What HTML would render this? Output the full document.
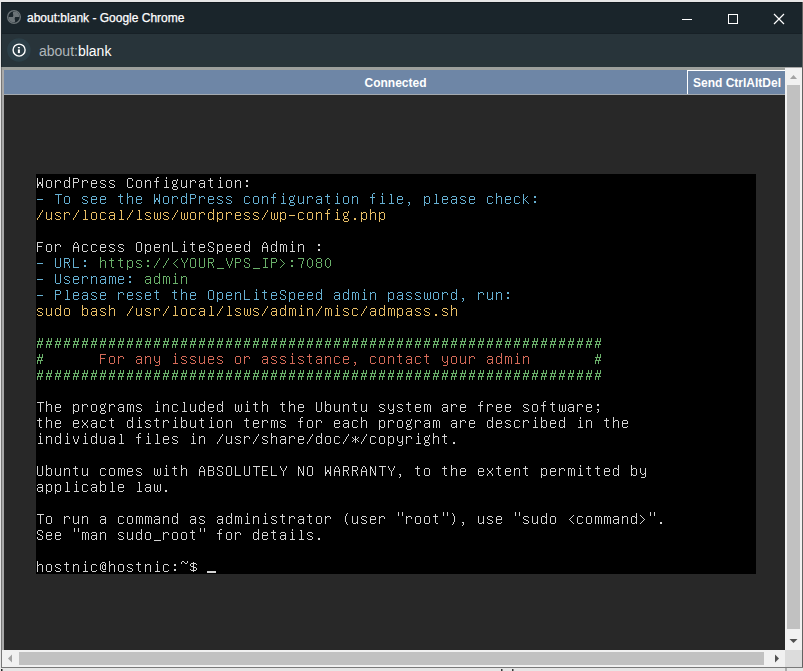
<!DOCTYPE html>
<html><head><meta charset="utf-8">
<style>
*{margin:0;padding:0;box-sizing:border-box}
html,body{width:803px;height:671px;overflow:hidden;background:#e6e6e6;font-family:"Liberation Sans",sans-serif;position:relative}
.abs{position:absolute}
#frame{position:absolute;left:1px;top:2px;width:802px;height:666px;background:#777}
#rb{position:absolute;left:802px;top:2px;width:1px;height:666px;background:#626262}
#title{position:absolute;left:2px;top:2px;width:800px;height:31px;background:#1a252b;border-top:1px solid #121a1f}
#addr{position:absolute;left:2px;top:33px;width:800px;height:34px;background:#28343a;border-top:1px solid #172026}
#page{position:absolute;left:2px;top:67px;width:800px;height:600px;background:#a8a8a8}
#status{position:absolute;left:4px;top:70px;width:781px;height:24px;background:#6e86a6;color:#fff;font:bold 12px "Liberation Sans",sans-serif}
#sline{position:absolute;left:4px;top:94px;width:781px;height:1px;background:#a4aab0}
#canvas{position:absolute;left:4px;top:95px;width:781px;height:555px;background:#282828}
#btn{position:absolute;left:687px;top:70px;width:98px;height:24px;border-left:1px solid #fff;border-top:1px solid #fff}
#vsb{position:absolute;left:785px;top:68px;width:17px;height:582px;background:#f1f1f1}
#vth{position:absolute;left:787px;top:85px;width:13px;height:544px;background:#c1c1c1}
#hsb{position:absolute;left:2px;top:650px;width:783px;height:17px;background:#f1f1f1}
#hth{position:absolute;left:19px;top:652px;width:745px;height:13px;background:#c1c1c1}
#corner{position:absolute;left:785px;top:650px;width:17px;height:17px;background:#dcdcdc}
#bline{position:absolute;left:1px;top:667px;width:802px;height:1px;background:#7a7a7a}
#term{position:absolute;left:36px;top:174px;width:720px;height:400px}
</style></head><body>
<div id="frame"></div><div id="rb"></div>
<div id="title">
  <svg class="abs" style="left:0;top:-1.1px" width="800" height="31">
   <circle cx="12" cy="15" r="6.35" fill="none" stroke="#6b7377" stroke-width="1.35"/>
   <path d="M10.8 15 L17.4 15 C17.4 11.6 15.2 9.6 12.2 9.6 C10.8 9.6 10.6 11.2 11.1 12.3 C11.5 13.2 11.3 14.2 10.8 15 Z" fill="#6b7377"/>
   <path d="M13.2 15 L6.6 15 C6.6 18.4 8.8 20.4 11.8 20.4 C13.2 20.4 13.4 18.8 12.9 17.7 C12.5 16.8 12.7 15.8 13.2 15 Z" fill="#6b7377"/>
  </svg>
  <div class="abs" style="left:25px;top:8px;font-size:12px;color:#fff;white-space:nowrap;-webkit-text-stroke:0.25px #fff">about:blank - Google Chrome</div>
  <svg class="abs" style="left:0;top:0" width="800" height="31">
   <rect x="680" y="16" width="10" height="1" fill="#fff"/>
   <rect x="726.5" y="11.5" width="9" height="9" fill="none" stroke="#fff" stroke-width="1"/>
   <path d="M772 11 L782 21 M782 11 L772 21" stroke="#fff" stroke-width="1.2"/>
  </svg>
</div>
<div id="addr">
  <svg class="abs" style="left:0;top:0" width="100" height="34">
   <circle cx="16.9" cy="16" r="11.8" fill="#2c3f48"/>
   <circle cx="17.1" cy="16.1" r="6" fill="none" stroke="#fff" stroke-width="1.4"/>
   <rect x="15.9" y="15.4" width="2" height="3.7" fill="#fff"/>
   <rect x="15.9" y="13" width="2" height="1.3" fill="#fff"/>
  </svg>
  <div class="abs" style="left:37px;top:9px;font-size:14px;color:#b0b7ba;white-space:nowrap">about:<span style="color:#fff">blank</span></div>
</div>
<div id="page"></div><div class="abs" style="left:2px;top:67px;width:783px;height:3px;background:#9da09d"></div><div class="abs" style="left:1px;top:2px;width:1px;height:65px;background:#1e272c"></div>
<div id="status"><div class="abs" style="left:1px;width:781px;top:6px;text-align:center">Connected</div></div>
<div id="btn"><div class="abs" style="left:5px;top:5px;font:bold 12px 'Liberation Sans',sans-serif;color:#fff;white-space:nowrap">Send CtrlAltDel</div></div>
<div id="sline"></div>
<div id="canvas"></div>
<div id="vsb"></div><div id="vth"></div>
<div id="hsb"></div><div id="hth"></div>
<div id="corner"></div>
<div id="bline"></div>
<svg class="abs" style="left:0;top:0" width="803" height="671">
 <path d="M790 79 L797 79 L793.5 75 Z" fill="#a3a3a3"/>
 <path d="M789.5 639 L797.5 639 L793.5 643 Z" fill="#505050"/>
 <path d="M12 654.5 L12 662.5 L8 658.5 Z" fill="#a3a3a3"/>
 <path d="M775 654.5 L775 662.5 L779 658.5 Z" fill="#505050"/>
 <rect x="501" y="669" width="1.5" height="2" fill="#333"/>
 <rect x="512" y="669" width="1.5" height="2" fill="#333"/>
 <rect x="785.5" y="668" width="1" height="3" fill="#777"/>
 <rect x="1" y="669" width="1.5" height="2" fill="#222"/>
</svg>
<svg id="term" width="720" height="400" viewBox="0 0 720 400" shape-rendering="crispEdges"><rect width="720" height="400" fill="#000"/><path fill="#d4d4d4" d="M1 4h1v6h-1zM6 4h1v6h-1zM3 8h2v2h-2zM1 10h2v2h-2zM5 10h2v2h-2zM1 12h1v2h-1zM6 12h1v2h-1zM11 6h4v1h-4zM10 7h1v6h-1zM15 7h1v6h-1zM11 13h4v1h-4zM19 6h1v1h-1zM21 6h3v1h-3zM19 7h2v1h-2zM24 7h1v2h-1zM19 8h1v6h-1zM33 3h1v4h-1zM29 6h3v1h-3zM28 7h1v6h-1zM32 7h2v1h-2zM33 8h1v4h-1zM32 12h2v1h-2zM29 13h3v1h-3zM33 13h1v1h-1zM37 4h5v1h-5zM37 5h1v3h-1zM42 5h1v3h-1zM37 8h5v1h-5zM37 9h1v5h-1zM46 6h1v1h-1zM48 6h3v1h-3zM46 7h2v1h-2zM51 7h1v2h-1zM46 8h1v6h-1zM56 6h4v1h-4zM55 7h1v2h-1zM60 7h1v2h-1zM55 9h6v1h-6zM55 10h1v3h-1zM60 12h1v1h-1zM56 13h4v1h-4zM65 6h4v1h-4zM64 7h1v2h-1zM69 7h1v1h-1zM65 9h2v1h-2zM67 10h2v1h-2zM69 11h1v2h-1zM64 12h1v1h-1zM65 13h4v1h-4zM74 6h4v1h-4zM73 7h1v2h-1zM78 7h1v1h-1zM74 9h2v1h-2zM76 10h2v1h-2zM78 11h1v2h-1zM73 12h1v1h-1zM74 13h4v1h-4zM92 4h4v1h-4zM91 5h1v8h-1zM96 5h1v2h-1zM96 11h1v2h-1zM92 13h4v1h-4zM101 6h4v1h-4zM100 7h1v6h-1zM105 7h1v6h-1zM101 13h4v1h-4zM109 6h1v1h-1zM111 6h3v1h-3zM109 7h2v1h-2zM114 7h1v7h-1zM109 8h1v6h-1zM121 3h2v1h-2zM120 4h1v3h-1zM118 7h5v1h-5zM120 8h1v6h-1zM130 3h1v2h-1zM129 6h2v1h-2zM130 7h1v6h-1zM128 13h5v1h-5zM141 5h1v2h-1zM137 6h3v1h-3zM136 7h1v3h-1zM140 7h1v3h-1zM137 10h3v1h-3zM137 11h1v1h-1zM137 12h4v1h-4zM136 13h1v2h-1zM141 13h1v2h-1zM137 15h4v1h-4zM145 6h1v7h-1zM150 6h1v6h-1zM149 12h2v1h-2zM146 13h3v1h-3zM150 13h1v1h-1zM154 6h1v1h-1zM156 6h3v1h-3zM154 7h2v1h-2zM159 7h1v2h-1zM154 8h1v6h-1zM164 6h4v1h-4zM163 7h1v1h-1zM168 7h1v2h-1zM164 9h5v1h-5zM163 10h1v3h-1zM168 10h1v2h-1zM167 12h2v1h-2zM164 13h3v1h-3zM168 13h1v1h-1zM174 4h1v2h-1zM172 6h5v1h-5zM174 7h1v6h-1zM175 13h2v1h-2zM184 3h1v2h-1zM183 6h2v1h-2zM184 7h1v6h-1zM182 13h5v1h-5zM191 6h4v1h-4zM190 7h1v6h-1zM195 7h1v6h-1zM191 13h4v1h-4zM199 6h1v1h-1zM201 6h3v1h-3zM199 7h2v1h-2zM204 7h1v7h-1zM199 8h1v6h-1zM210 6h2v2h-2zM210 11h2v2h-2zM1 68h6v1h-6zM1 69h1v3h-1zM1 72h5v1h-5zM1 73h1v5h-1zM11 70h4v1h-4zM10 71h1v6h-1zM15 71h1v6h-1zM11 77h4v1h-4zM19 70h1v1h-1zM21 70h3v1h-3zM19 71h2v1h-2zM24 71h1v2h-1zM19 72h1v6h-1zM39 68h2v1h-2zM38 69h1v2h-1zM41 69h1v2h-1zM37 71h1v2h-1zM42 71h1v2h-1zM37 73h6v1h-6zM37 74h1v4h-1zM42 74h1v4h-1zM47 70h4v1h-4zM46 71h1v6h-1zM51 71h1v1h-1zM51 76h1v1h-1zM47 77h4v1h-4zM56 70h4v1h-4zM55 71h1v6h-1zM60 71h1v1h-1zM60 76h1v1h-1zM56 77h4v1h-4zM65 70h4v1h-4zM64 71h1v2h-1zM69 71h1v2h-1zM64 73h6v1h-6zM64 74h1v3h-1zM69 76h1v1h-1zM65 77h4v1h-4zM74 70h4v1h-4zM73 71h1v2h-1zM78 71h1v1h-1zM74 73h2v1h-2zM76 74h2v1h-2zM78 75h1v2h-1zM73 76h1v1h-1zM74 77h4v1h-4zM83 70h4v1h-4zM82 71h1v2h-1zM87 71h1v1h-1zM83 73h2v1h-2zM85 74h2v1h-2zM87 75h1v2h-1zM82 76h1v1h-1zM83 77h4v1h-4zM101 68h4v1h-4zM100 69h1v8h-1zM105 69h1v8h-1zM101 77h4v1h-4zM109 70h1v1h-1zM111 70h3v1h-3zM109 71h2v1h-2zM114 71h1v6h-1zM109 72h1v4h-1zM109 76h2v1h-2zM109 77h1v3h-1zM111 77h3v1h-3zM119 70h4v1h-4zM118 71h1v2h-1zM123 71h1v2h-1zM118 73h6v1h-6zM118 74h1v3h-1zM123 76h1v1h-1zM119 77h4v1h-4zM127 70h1v1h-1zM129 70h3v1h-3zM127 71h2v1h-2zM132 71h1v7h-1zM127 72h1v6h-1zM136 68h1v9h-1zM136 77h6v1h-6zM148 67h1v2h-1zM147 70h2v1h-2zM148 71h1v6h-1zM146 77h5v1h-5zM156 68h1v2h-1zM154 70h5v1h-5zM156 71h1v6h-1zM157 77h2v1h-2zM164 70h4v1h-4zM163 71h1v2h-1zM168 71h1v2h-1zM163 73h6v1h-6zM163 74h1v3h-1zM168 76h1v1h-1zM164 77h4v1h-4zM173 68h4v1h-4zM172 69h1v3h-1zM177 69h1v2h-1zM173 72h2v1h-2zM175 73h2v1h-2zM177 74h1v3h-1zM172 75h1v2h-1zM173 77h4v1h-4zM181 70h1v1h-1zM183 70h3v1h-3zM181 71h2v1h-2zM186 71h1v6h-1zM181 72h1v4h-1zM181 76h2v1h-2zM181 77h1v3h-1zM183 77h3v1h-3zM191 70h4v1h-4zM190 71h1v2h-1zM195 71h1v2h-1zM190 73h6v1h-6zM190 74h1v3h-1zM195 76h1v1h-1zM191 77h4v1h-4zM200 70h4v1h-4zM199 71h1v2h-1zM204 71h1v2h-1zM199 73h6v1h-6zM199 74h1v3h-1zM204 76h1v1h-1zM200 77h4v1h-4zM213 67h1v4h-1zM209 70h3v1h-3zM208 71h1v6h-1zM212 71h2v1h-2zM213 72h1v4h-1zM212 76h2v1h-2zM209 77h3v1h-3zM213 77h1v1h-1zM228 68h2v1h-2zM227 69h1v2h-1zM230 69h1v2h-1zM226 71h1v2h-1zM231 71h1v2h-1zM226 73h6v1h-6zM226 74h1v4h-1zM231 74h1v4h-1zM240 67h1v4h-1zM236 70h3v1h-3zM235 71h1v6h-1zM239 71h2v1h-2zM240 72h1v4h-1zM239 76h2v1h-2zM236 77h3v1h-3zM240 77h1v1h-1zM244 70h3v1h-3zM248 70h2v1h-2zM244 71h1v7h-1zM247 71h1v7h-1zM250 71h1v7h-1zM256 67h1v2h-1zM255 70h2v1h-2zM256 71h1v6h-1zM254 77h5v1h-5zM262 70h1v1h-1zM264 70h3v1h-3zM262 71h2v1h-2zM267 71h1v7h-1zM262 72h1v6h-1zM282 70h2v2h-2zM282 75h2v2h-2zM1 228h7v1h-7zM4 229h1v9h-1zM10 227h1v4h-1zM12 230h3v1h-3zM10 231h2v1h-2zM15 231h1v7h-1zM10 232h1v6h-1zM20 230h4v1h-4zM19 231h1v2h-1zM24 231h1v2h-1zM19 233h6v1h-6zM19 234h1v3h-1zM24 236h1v1h-1zM20 237h4v1h-4zM37 230h1v1h-1zM39 230h3v1h-3zM37 231h2v1h-2zM42 231h1v6h-1zM37 232h1v4h-1zM37 236h2v1h-2zM37 237h1v3h-1zM39 237h3v1h-3zM46 230h1v1h-1zM48 230h3v1h-3zM46 231h2v1h-2zM51 231h1v2h-1zM46 232h1v6h-1zM56 230h4v1h-4zM55 231h1v6h-1zM60 231h1v6h-1zM56 237h4v1h-4zM69 229h1v2h-1zM65 230h3v1h-3zM64 231h1v3h-1zM68 231h1v3h-1zM65 234h3v1h-3zM65 235h1v1h-1zM65 236h4v1h-4zM64 237h1v2h-1zM69 237h1v2h-1zM65 239h4v1h-4zM73 230h1v1h-1zM75 230h3v1h-3zM73 231h2v1h-2zM78 231h1v2h-1zM73 232h1v6h-1zM83 230h4v1h-4zM82 231h1v1h-1zM87 231h1v2h-1zM83 233h5v1h-5zM82 234h1v3h-1zM87 234h1v2h-1zM86 236h2v1h-2zM83 237h3v1h-3zM87 237h1v1h-1zM91 230h3v1h-3zM95 230h2v1h-2zM91 231h1v7h-1zM94 231h1v7h-1zM97 231h1v7h-1zM101 230h4v1h-4zM100 231h1v2h-1zM105 231h1v1h-1zM101 233h2v1h-2zM103 234h2v1h-2zM105 235h1v2h-1zM100 236h1v1h-1zM101 237h4v1h-4zM121 227h1v2h-1zM120 230h2v1h-2zM121 231h1v6h-1zM119 237h5v1h-5zM127 230h1v1h-1zM129 230h3v1h-3zM127 231h2v1h-2zM132 231h1v7h-1zM127 232h1v6h-1zM137 230h4v1h-4zM136 231h1v6h-1zM141 231h1v1h-1zM141 236h1v1h-1zM137 237h4v1h-4zM147 228h2v1h-2zM148 229h1v8h-1zM146 237h5v1h-5zM154 230h1v7h-1zM159 230h1v6h-1zM158 236h2v1h-2zM155 237h3v1h-3zM159 237h1v1h-1zM168 227h1v4h-1zM164 230h3v1h-3zM163 231h1v6h-1zM167 231h2v1h-2zM168 232h1v4h-1zM167 236h2v1h-2zM164 237h3v1h-3zM168 237h1v1h-1zM173 230h4v1h-4zM172 231h1v2h-1zM177 231h1v2h-1zM172 233h6v1h-6zM172 234h1v3h-1zM177 236h1v1h-1zM173 237h4v1h-4zM186 227h1v4h-1zM182 230h3v1h-3zM181 231h1v6h-1zM185 231h2v1h-2zM186 232h1v4h-1zM185 236h2v1h-2zM182 237h3v1h-3zM186 237h1v1h-1zM199 230h1v7h-1zM205 230h1v7h-1zM202 231h1v6h-1zM200 237h2v1h-2zM203 237h2v1h-2zM211 227h1v2h-1zM210 230h2v1h-2zM211 231h1v6h-1zM209 237h5v1h-5zM219 228h1v2h-1zM217 230h5v1h-5zM219 231h1v6h-1zM220 237h2v1h-2zM226 227h1v4h-1zM228 230h3v1h-3zM226 231h2v1h-2zM231 231h1v7h-1zM226 232h1v6h-1zM246 228h1v2h-1zM244 230h5v1h-5zM246 231h1v6h-1zM247 237h2v1h-2zM253 227h1v4h-1zM255 230h3v1h-3zM253 231h2v1h-2zM258 231h1v7h-1zM253 232h1v6h-1zM263 230h4v1h-4zM262 231h1v2h-1zM267 231h1v2h-1zM262 233h6v1h-6zM262 234h1v3h-1zM267 236h1v1h-1zM263 237h4v1h-4zM280 228h1v9h-1zM285 228h1v9h-1zM281 237h4v1h-4zM289 227h1v4h-1zM291 230h3v1h-3zM289 231h2v1h-2zM294 231h1v6h-1zM289 232h1v4h-1zM289 236h2v1h-2zM289 237h1v1h-1zM291 237h3v1h-3zM298 230h1v7h-1zM303 230h1v6h-1zM302 236h2v1h-2zM299 237h3v1h-3zM303 237h1v1h-1zM307 230h1v1h-1zM309 230h3v1h-3zM307 231h2v1h-2zM312 231h1v7h-1zM307 232h1v6h-1zM318 228h1v2h-1zM316 230h5v1h-5zM318 231h1v6h-1zM319 237h2v1h-2zM325 230h1v7h-1zM330 230h1v6h-1zM329 236h2v1h-2zM326 237h3v1h-3zM330 237h1v1h-1zM344 230h4v1h-4zM343 231h1v2h-1zM348 231h1v1h-1zM344 233h2v1h-2zM346 234h2v1h-2zM348 235h1v2h-1zM343 236h1v1h-1zM344 237h4v1h-4zM352 230h1v5h-1zM357 230h1v5h-1zM353 235h1v1h-1zM356 235h2v1h-2zM354 236h2v1h-2zM357 236h1v3h-1zM353 239h4v1h-4zM362 230h4v1h-4zM361 231h1v2h-1zM366 231h1v1h-1zM362 233h2v1h-2zM364 234h2v1h-2zM366 235h1v2h-1zM361 236h1v1h-1zM362 237h4v1h-4zM372 228h1v2h-1zM370 230h5v1h-5zM372 231h1v6h-1zM373 237h2v1h-2zM380 230h4v1h-4zM379 231h1v2h-1zM384 231h1v2h-1zM379 233h6v1h-6zM379 234h1v3h-1zM384 236h1v1h-1zM380 237h4v1h-4zM388 230h3v1h-3zM392 230h2v1h-2zM388 231h1v7h-1zM391 231h1v7h-1zM394 231h1v7h-1zM407 230h4v1h-4zM406 231h1v1h-1zM411 231h1v2h-1zM407 233h5v1h-5zM406 234h1v3h-1zM411 234h1v2h-1zM410 236h2v1h-2zM407 237h3v1h-3zM411 237h1v1h-1zM415 230h1v1h-1zM417 230h3v1h-3zM415 231h2v1h-2zM420 231h1v2h-1zM415 232h1v6h-1zM425 230h4v1h-4zM424 231h1v2h-1zM429 231h1v2h-1zM424 233h6v1h-6zM424 234h1v3h-1zM429 236h1v1h-1zM425 237h4v1h-4zM445 227h2v1h-2zM444 228h1v3h-1zM442 231h5v1h-5zM444 232h1v6h-1zM451 230h1v1h-1zM453 230h3v1h-3zM451 231h2v1h-2zM456 231h1v2h-1zM451 232h1v6h-1zM461 230h4v1h-4zM460 231h1v2h-1zM465 231h1v2h-1zM460 233h6v1h-6zM460 234h1v3h-1zM465 236h1v1h-1zM461 237h4v1h-4zM470 230h4v1h-4zM469 231h1v2h-1zM474 231h1v2h-1zM469 233h6v1h-6zM469 234h1v3h-1zM474 236h1v1h-1zM470 237h4v1h-4zM488 230h4v1h-4zM487 231h1v2h-1zM492 231h1v1h-1zM488 233h2v1h-2zM490 234h2v1h-2zM492 235h1v2h-1zM487 236h1v1h-1zM488 237h4v1h-4zM497 230h4v1h-4zM496 231h1v6h-1zM501 231h1v6h-1zM497 237h4v1h-4zM508 227h2v1h-2zM507 228h1v3h-1zM505 231h5v1h-5zM507 232h1v6h-1zM516 228h1v2h-1zM514 230h5v1h-5zM516 231h1v6h-1zM517 237h2v1h-2zM523 230h1v7h-1zM529 230h1v7h-1zM526 231h1v6h-1zM524 237h2v1h-2zM527 237h2v1h-2zM533 230h4v1h-4zM532 231h1v1h-1zM537 231h1v2h-1zM533 233h5v1h-5zM532 234h1v3h-1zM537 234h1v2h-1zM536 236h2v1h-2zM533 237h3v1h-3zM537 237h1v1h-1zM541 230h1v1h-1zM543 230h3v1h-3zM541 231h2v1h-2zM546 231h1v2h-1zM541 232h1v6h-1zM551 230h4v1h-4zM550 231h1v2h-1zM555 231h1v2h-1zM550 233h6v1h-6zM550 234h1v3h-1zM555 236h1v1h-1zM551 237h4v1h-4zM561 230h2v2h-2zM561 235h2v1h-2zM562 236h1v2h-1zM561 238h1v1h-1zM3 244h1v2h-1zM1 246h5v1h-5zM3 247h1v6h-1zM4 253h2v1h-2zM10 243h1v4h-1zM12 246h3v1h-3zM10 247h2v1h-2zM15 247h1v7h-1zM10 248h1v6h-1zM20 246h4v1h-4zM19 247h1v2h-1zM24 247h1v2h-1zM19 249h6v1h-6zM19 250h1v3h-1zM24 252h1v1h-1zM20 253h4v1h-4zM38 246h4v1h-4zM37 247h1v2h-1zM42 247h1v2h-1zM37 249h6v1h-6zM37 250h1v3h-1zM42 252h1v1h-1zM38 253h4v1h-4zM46 246h1v2h-1zM51 246h1v2h-1zM47 248h1v1h-1zM50 248h1v1h-1zM48 249h2v2h-2zM47 251h1v1h-1zM50 251h1v1h-1zM46 252h1v2h-1zM51 252h1v2h-1zM56 246h4v1h-4zM55 247h1v1h-1zM60 247h1v2h-1zM56 249h5v1h-5zM55 250h1v3h-1zM60 250h1v2h-1zM59 252h2v1h-2zM56 253h3v1h-3zM60 253h1v1h-1zM65 246h4v1h-4zM64 247h1v6h-1zM69 247h1v1h-1zM69 252h1v1h-1zM65 253h4v1h-4zM75 244h1v2h-1zM73 246h5v1h-5zM75 247h1v6h-1zM76 253h2v1h-2zM96 243h1v4h-1zM92 246h3v1h-3zM91 247h1v6h-1zM95 247h2v1h-2zM96 248h1v4h-1zM95 252h2v1h-2zM92 253h3v1h-3zM96 253h1v1h-1zM103 243h1v2h-1zM102 246h2v1h-2zM103 247h1v6h-1zM101 253h5v1h-5zM110 246h4v1h-4zM109 247h1v2h-1zM114 247h1v1h-1zM110 249h2v1h-2zM112 250h2v1h-2zM114 251h1v2h-1zM109 252h1v1h-1zM110 253h4v1h-4zM120 244h1v2h-1zM118 246h5v1h-5zM120 247h1v6h-1zM121 253h2v1h-2zM127 246h1v1h-1zM129 246h3v1h-3zM127 247h2v1h-2zM132 247h1v2h-1zM127 248h1v6h-1zM139 243h1v2h-1zM138 246h2v1h-2zM139 247h1v6h-1zM137 253h5v1h-5zM145 243h1v4h-1zM147 246h3v1h-3zM145 247h2v1h-2zM150 247h1v6h-1zM145 248h1v4h-1zM145 252h2v1h-2zM145 253h1v1h-1zM147 253h3v1h-3zM154 246h1v7h-1zM159 246h1v6h-1zM158 252h2v1h-2zM155 253h3v1h-3zM159 253h1v1h-1zM165 244h1v2h-1zM163 246h5v1h-5zM165 247h1v6h-1zM166 253h2v1h-2zM175 243h1v2h-1zM174 246h2v1h-2zM175 247h1v6h-1zM173 253h5v1h-5zM182 246h4v1h-4zM181 247h1v6h-1zM186 247h1v6h-1zM182 253h4v1h-4zM190 246h1v1h-1zM192 246h3v1h-3zM190 247h2v1h-2zM195 247h1v7h-1zM190 248h1v6h-1zM210 244h1v2h-1zM208 246h5v1h-5zM210 247h1v6h-1zM211 253h2v1h-2zM218 246h4v1h-4zM217 247h1v2h-1zM222 247h1v2h-1zM217 249h6v1h-6zM217 250h1v3h-1zM222 252h1v1h-1zM218 253h4v1h-4zM226 246h1v1h-1zM228 246h3v1h-3zM226 247h2v1h-2zM231 247h1v2h-1zM226 248h1v6h-1zM235 246h3v1h-3zM239 246h2v1h-2zM235 247h1v7h-1zM238 247h1v7h-1zM241 247h1v7h-1zM245 246h4v1h-4zM244 247h1v2h-1zM249 247h1v1h-1zM245 249h2v1h-2zM247 250h2v1h-2zM249 251h1v2h-1zM244 252h1v1h-1zM245 253h4v1h-4zM265 243h2v1h-2zM264 244h1v3h-1zM262 247h5v1h-5zM264 248h1v6h-1zM272 246h4v1h-4zM271 247h1v6h-1zM276 247h1v6h-1zM272 253h4v1h-4zM280 246h1v1h-1zM282 246h3v1h-3zM280 247h2v1h-2zM285 247h1v2h-1zM280 248h1v6h-1zM299 246h4v1h-4zM298 247h1v2h-1zM303 247h1v2h-1zM298 249h6v1h-6zM298 250h1v3h-1zM303 252h1v1h-1zM299 253h4v1h-4zM308 246h4v1h-4zM307 247h1v1h-1zM312 247h1v2h-1zM308 249h5v1h-5zM307 250h1v3h-1zM312 250h1v2h-1zM311 252h2v1h-2zM308 253h3v1h-3zM312 253h1v1h-1zM317 246h4v1h-4zM316 247h1v6h-1zM321 247h1v1h-1zM321 252h1v1h-1zM317 253h4v1h-4zM325 243h1v4h-1zM327 246h3v1h-3zM325 247h2v1h-2zM330 247h1v7h-1zM325 248h1v6h-1zM343 246h1v1h-1zM345 246h3v1h-3zM343 247h2v1h-2zM348 247h1v6h-1zM343 248h1v4h-1zM343 252h2v1h-2zM343 253h1v3h-1zM345 253h3v1h-3zM352 246h1v1h-1zM354 246h3v1h-3zM352 247h2v1h-2zM357 247h1v2h-1zM352 248h1v6h-1zM362 246h4v1h-4zM361 247h1v6h-1zM366 247h1v6h-1zM362 253h4v1h-4zM375 245h1v2h-1zM371 246h3v1h-3zM370 247h1v3h-1zM374 247h1v3h-1zM371 250h3v1h-3zM371 251h1v1h-1zM371 252h4v1h-4zM370 253h1v2h-1zM375 253h1v2h-1zM371 255h4v1h-4zM379 246h1v1h-1zM381 246h3v1h-3zM379 247h2v1h-2zM384 247h1v2h-1zM379 248h1v6h-1zM389 246h4v1h-4zM388 247h1v1h-1zM393 247h1v2h-1zM389 249h5v1h-5zM388 250h1v3h-1zM393 250h1v2h-1zM392 252h2v1h-2zM389 253h3v1h-3zM393 253h1v1h-1zM397 246h3v1h-3zM401 246h2v1h-2zM397 247h1v7h-1zM400 247h1v7h-1zM403 247h1v7h-1zM416 246h4v1h-4zM415 247h1v1h-1zM420 247h1v2h-1zM416 249h5v1h-5zM415 250h1v3h-1zM420 250h1v2h-1zM419 252h2v1h-2zM416 253h3v1h-3zM420 253h1v1h-1zM424 246h1v1h-1zM426 246h3v1h-3zM424 247h2v1h-2zM429 247h1v2h-1zM424 248h1v6h-1zM434 246h4v1h-4zM433 247h1v2h-1zM438 247h1v2h-1zM433 249h6v1h-6zM433 250h1v3h-1zM438 252h1v1h-1zM434 253h4v1h-4zM456 243h1v4h-1zM452 246h3v1h-3zM451 247h1v6h-1zM455 247h2v1h-2zM456 248h1v4h-1zM455 252h2v1h-2zM452 253h3v1h-3zM456 253h1v1h-1zM461 246h4v1h-4zM460 247h1v2h-1zM465 247h1v2h-1zM460 249h6v1h-6zM460 250h1v3h-1zM465 252h1v1h-1zM461 253h4v1h-4zM470 246h4v1h-4zM469 247h1v2h-1zM474 247h1v1h-1zM470 249h2v1h-2zM472 250h2v1h-2zM474 251h1v2h-1zM469 252h1v1h-1zM470 253h4v1h-4zM479 246h4v1h-4zM478 247h1v6h-1zM483 247h1v1h-1zM483 252h1v1h-1zM479 253h4v1h-4zM487 246h1v1h-1zM489 246h3v1h-3zM487 247h2v1h-2zM492 247h1v2h-1zM487 248h1v6h-1zM499 243h1v2h-1zM498 246h2v1h-2zM499 247h1v6h-1zM497 253h5v1h-5zM505 243h1v4h-1zM507 246h3v1h-3zM505 247h2v1h-2zM510 247h1v6h-1zM505 248h1v4h-1zM505 252h2v1h-2zM505 253h1v1h-1zM507 253h3v1h-3zM515 246h4v1h-4zM514 247h1v2h-1zM519 247h1v2h-1zM514 249h6v1h-6zM514 250h1v3h-1zM519 252h1v1h-1zM515 253h4v1h-4zM528 243h1v4h-1zM524 246h3v1h-3zM523 247h1v6h-1zM527 247h2v1h-2zM528 248h1v4h-1zM527 252h2v1h-2zM524 253h3v1h-3zM528 253h1v1h-1zM544 243h1v2h-1zM543 246h2v1h-2zM544 247h1v6h-1zM542 253h5v1h-5zM550 246h1v1h-1zM552 246h3v1h-3zM550 247h2v1h-2zM555 247h1v7h-1zM550 248h1v6h-1zM570 244h1v2h-1zM568 246h5v1h-5zM570 247h1v6h-1zM571 253h2v1h-2zM577 243h1v4h-1zM579 246h3v1h-3zM577 247h2v1h-2zM582 247h1v7h-1zM577 248h1v6h-1zM587 246h4v1h-4zM586 247h1v2h-1zM591 247h1v2h-1zM586 249h6v1h-6zM586 250h1v3h-1zM591 252h1v1h-1zM587 253h4v1h-4zM4 259h1v2h-1zM3 262h2v1h-2zM4 263h1v6h-1zM2 269h5v1h-5zM10 262h1v1h-1zM12 262h3v1h-3zM10 263h2v1h-2zM15 263h1v7h-1zM10 264h1v6h-1zM24 259h1v4h-1zM20 262h3v1h-3zM19 263h1v6h-1zM23 263h2v1h-2zM24 264h1v4h-1zM23 268h2v1h-2zM20 269h3v1h-3zM24 269h1v1h-1zM31 259h1v2h-1zM30 262h2v1h-2zM31 263h1v6h-1zM29 269h5v1h-5zM37 262h1v3h-1zM42 262h1v3h-1zM38 265h1v3h-1zM41 265h1v3h-1zM39 268h2v2h-2zM49 259h1v2h-1zM48 262h2v1h-2zM49 263h1v6h-1zM47 269h5v1h-5zM60 259h1v4h-1zM56 262h3v1h-3zM55 263h1v6h-1zM59 263h2v1h-2zM60 264h1v4h-1zM59 268h2v1h-2zM56 269h3v1h-3zM60 269h1v1h-1zM64 262h1v7h-1zM69 262h1v6h-1zM68 268h2v1h-2zM65 269h3v1h-3zM69 269h1v1h-1zM74 262h4v1h-4zM73 263h1v1h-1zM78 263h1v2h-1zM74 265h5v1h-5zM73 266h1v3h-1zM78 266h1v2h-1zM77 268h2v1h-2zM74 269h3v1h-3zM78 269h1v1h-1zM84 260h2v1h-2zM85 261h1v8h-1zM83 269h5v1h-5zM103 259h2v1h-2zM102 260h1v3h-1zM100 263h5v1h-5zM102 264h1v6h-1zM112 259h1v2h-1zM111 262h2v1h-2zM112 263h1v6h-1zM110 269h5v1h-5zM120 260h2v1h-2zM121 261h1v8h-1zM119 269h5v1h-5zM128 262h4v1h-4zM127 263h1v2h-1zM132 263h1v2h-1zM127 265h6v1h-6zM127 266h1v3h-1zM132 268h1v1h-1zM128 269h4v1h-4zM137 262h4v1h-4zM136 263h1v2h-1zM141 263h1v1h-1zM137 265h2v1h-2zM139 266h2v1h-2zM141 267h1v2h-1zM136 268h1v1h-1zM137 269h4v1h-4zM157 259h1v2h-1zM156 262h2v1h-2zM157 263h1v6h-1zM155 269h5v1h-5zM163 262h1v1h-1zM165 262h3v1h-3zM163 263h2v1h-2zM168 263h1v7h-1zM163 264h1v6h-1zM186 260h1v2h-1zM185 262h1v1h-1zM184 263h1v2h-1zM183 265h1v2h-1zM182 267h1v1h-1zM181 268h1v2h-1zM190 262h1v7h-1zM195 262h1v6h-1zM194 268h2v1h-2zM191 269h3v1h-3zM195 269h1v1h-1zM200 262h4v1h-4zM199 263h1v2h-1zM204 263h1v1h-1zM200 265h2v1h-2zM202 266h2v1h-2zM204 267h1v2h-1zM199 268h1v1h-1zM200 269h4v1h-4zM208 262h1v1h-1zM210 262h3v1h-3zM208 263h2v1h-2zM213 263h1v2h-1zM208 264h1v6h-1zM222 260h1v2h-1zM221 262h1v1h-1zM220 263h1v2h-1zM219 265h1v2h-1zM218 267h1v1h-1zM217 268h1v2h-1zM227 262h4v1h-4zM226 263h1v2h-1zM231 263h1v1h-1zM227 265h2v1h-2zM229 266h2v1h-2zM231 267h1v2h-1zM226 268h1v1h-1zM227 269h4v1h-4zM235 259h1v4h-1zM237 262h3v1h-3zM235 263h2v1h-2zM240 263h1v7h-1zM235 264h1v6h-1zM245 262h4v1h-4zM244 263h1v1h-1zM249 263h1v2h-1zM245 265h5v1h-5zM244 266h1v3h-1zM249 266h1v2h-1zM248 268h2v1h-2zM245 269h3v1h-3zM249 269h1v1h-1zM253 262h1v1h-1zM255 262h3v1h-3zM253 263h2v1h-2zM258 263h1v2h-1zM253 264h1v6h-1zM263 262h4v1h-4zM262 263h1v2h-1zM267 263h1v2h-1zM262 265h6v1h-6zM262 266h1v3h-1zM267 268h1v1h-1zM263 269h4v1h-4zM276 260h1v2h-1zM275 262h1v1h-1zM274 263h1v2h-1zM273 265h1v2h-1zM272 267h1v1h-1zM271 268h1v2h-1zM285 259h1v4h-1zM281 262h3v1h-3zM280 263h1v6h-1zM284 263h2v1h-2zM285 264h1v4h-1zM284 268h2v1h-2zM281 269h3v1h-3zM285 269h1v1h-1zM290 262h4v1h-4zM289 263h1v6h-1zM294 263h1v6h-1zM290 269h4v1h-4zM299 262h4v1h-4zM298 263h1v6h-1zM303 263h1v1h-1zM303 268h1v1h-1zM299 269h4v1h-4zM312 260h1v2h-1zM311 262h1v1h-1zM310 263h1v2h-1zM309 265h1v2h-1zM308 267h1v1h-1zM307 268h1v2h-1zM319 262h1v3h-1zM316 263h1v1h-1zM322 263h1v1h-1zM317 264h1v1h-1zM321 264h1v1h-1zM318 265h3v1h-3zM317 266h1v1h-1zM319 266h1v3h-1zM321 266h1v1h-1zM316 267h1v1h-1zM322 267h1v1h-1zM330 260h1v2h-1zM329 262h1v1h-1zM328 263h1v2h-1zM327 265h1v2h-1zM326 267h1v1h-1zM325 268h1v2h-1zM335 262h4v1h-4zM334 263h1v6h-1zM339 263h1v1h-1zM339 268h1v1h-1zM335 269h4v1h-4zM344 262h4v1h-4zM343 263h1v6h-1zM348 263h1v6h-1zM344 269h4v1h-4zM352 262h1v1h-1zM354 262h3v1h-3zM352 263h2v1h-2zM357 263h1v6h-1zM352 264h1v4h-1zM352 268h2v1h-2zM352 269h1v3h-1zM354 269h3v1h-3zM361 262h1v5h-1zM366 262h1v5h-1zM362 267h1v1h-1zM365 267h2v1h-2zM363 268h2v1h-2zM366 268h1v3h-1zM362 271h4v1h-4zM370 262h1v1h-1zM372 262h3v1h-3zM370 263h2v1h-2zM375 263h1v2h-1zM370 264h1v6h-1zM382 259h1v2h-1zM381 262h2v1h-2zM382 263h1v6h-1zM380 269h5v1h-5zM393 261h1v2h-1zM389 262h3v1h-3zM388 263h1v3h-1zM392 263h1v3h-1zM389 266h3v1h-3zM389 267h1v1h-1zM389 268h4v1h-4zM388 269h1v2h-1zM393 269h1v2h-1zM389 271h4v1h-4zM397 259h1v4h-1zM399 262h3v1h-3zM397 263h2v1h-2zM402 263h1v7h-1zM397 264h1v6h-1zM408 260h1v2h-1zM406 262h5v1h-5zM408 263h1v6h-1zM409 269h2v1h-2zM417 268h2v2h-2zM1 292h1v9h-1zM6 292h1v9h-1zM2 301h4v1h-4zM10 291h1v4h-1zM12 294h3v1h-3zM10 295h2v1h-2zM15 295h1v6h-1zM10 296h1v4h-1zM10 300h2v1h-2zM10 301h1v1h-1zM12 301h3v1h-3zM19 294h1v7h-1zM24 294h1v6h-1zM23 300h2v1h-2zM20 301h3v1h-3zM24 301h1v1h-1zM28 294h1v1h-1zM30 294h3v1h-3zM28 295h2v1h-2zM33 295h1v7h-1zM28 296h1v6h-1zM39 292h1v2h-1zM37 294h5v1h-5zM39 295h1v6h-1zM40 301h2v1h-2zM46 294h1v7h-1zM51 294h1v6h-1zM50 300h2v1h-2zM47 301h3v1h-3zM51 301h1v1h-1zM65 294h4v1h-4zM64 295h1v6h-1zM69 295h1v1h-1zM69 300h1v1h-1zM65 301h4v1h-4zM74 294h4v1h-4zM73 295h1v6h-1zM78 295h1v6h-1zM74 301h4v1h-4zM82 294h3v1h-3zM86 294h2v1h-2zM82 295h1v7h-1zM85 295h1v7h-1zM88 295h1v7h-1zM92 294h4v1h-4zM91 295h1v2h-1zM96 295h1v2h-1zM91 297h6v1h-6zM91 298h1v3h-1zM96 300h1v1h-1zM92 301h4v1h-4zM101 294h4v1h-4zM100 295h1v2h-1zM105 295h1v1h-1zM101 297h2v1h-2zM103 298h2v1h-2zM105 299h1v2h-1zM100 300h1v1h-1zM101 301h4v1h-4zM118 294h1v7h-1zM124 294h1v7h-1zM121 295h1v6h-1zM119 301h2v1h-2zM122 301h2v1h-2zM130 291h1v2h-1zM129 294h2v1h-2zM130 295h1v6h-1zM128 301h5v1h-5zM138 292h1v2h-1zM136 294h5v1h-5zM138 295h1v6h-1zM139 301h2v1h-2zM145 291h1v4h-1zM147 294h3v1h-3zM145 295h2v1h-2zM150 295h1v7h-1zM145 296h1v6h-1zM165 292h2v1h-2zM164 293h1v2h-1zM167 293h1v2h-1zM163 295h1v2h-1zM168 295h1v2h-1zM163 297h6v1h-6zM163 298h1v4h-1zM168 298h1v4h-1zM172 292h5v1h-5zM172 293h1v3h-1zM177 293h1v3h-1zM172 296h5v1h-5zM172 297h1v4h-1zM177 297h1v4h-1zM172 301h5v1h-5zM182 292h4v1h-4zM181 293h1v3h-1zM186 293h1v2h-1zM182 296h2v1h-2zM184 297h2v1h-2zM186 298h1v3h-1zM181 299h1v2h-1zM182 301h4v1h-4zM191 292h4v1h-4zM190 293h1v8h-1zM195 293h1v8h-1zM191 301h4v1h-4zM199 292h1v9h-1zM199 301h6v1h-6zM208 292h1v9h-1zM213 292h1v9h-1zM209 301h4v1h-4zM217 292h7v1h-7zM220 293h1v9h-1zM226 292h6v1h-6zM226 293h1v3h-1zM226 296h5v1h-5zM226 297h1v4h-1zM226 301h6v1h-6zM235 292h1v9h-1zM235 301h6v1h-6zM244 292h1v2h-1zM250 292h1v2h-1zM245 294h1v2h-1zM249 294h1v2h-1zM246 296h1v1h-1zM248 296h1v1h-1zM247 297h1v5h-1zM262 292h1v1h-1zM267 292h1v7h-1zM262 293h2v2h-2zM262 295h1v7h-1zM264 295h1v2h-1zM265 297h1v2h-1zM266 299h2v2h-2zM267 301h1v1h-1zM272 292h4v1h-4zM271 293h1v8h-1zM276 293h1v8h-1zM272 301h4v1h-4zM289 292h1v6h-1zM294 292h1v6h-1zM291 296h2v2h-2zM289 298h2v2h-2zM293 298h2v2h-2zM289 300h1v2h-1zM294 300h1v2h-1zM300 292h2v1h-2zM299 293h1v2h-1zM302 293h1v2h-1zM298 295h1v2h-1zM303 295h1v2h-1zM298 297h6v1h-6zM298 298h1v4h-1zM303 298h1v4h-1zM307 292h5v1h-5zM307 293h1v3h-1zM312 293h1v3h-1zM307 296h5v1h-5zM307 297h1v5h-1zM310 297h1v1h-1zM311 298h1v2h-1zM312 300h1v2h-1zM316 292h5v1h-5zM316 293h1v3h-1zM321 293h1v3h-1zM316 296h5v1h-5zM316 297h1v5h-1zM319 297h1v1h-1zM320 298h1v2h-1zM321 300h1v2h-1zM327 292h2v1h-2zM326 293h1v2h-1zM329 293h1v2h-1zM325 295h1v2h-1zM330 295h1v2h-1zM325 297h6v1h-6zM325 298h1v4h-1zM330 298h1v4h-1zM334 292h1v1h-1zM339 292h1v7h-1zM334 293h2v2h-2zM334 295h1v7h-1zM336 295h1v2h-1zM337 297h1v2h-1zM338 299h2v2h-2zM339 301h1v1h-1zM343 292h7v1h-7zM346 293h1v9h-1zM352 292h1v2h-1zM358 292h1v2h-1zM353 294h1v2h-1zM357 294h1v2h-1zM354 296h1v1h-1zM356 296h1v1h-1zM355 297h1v5h-1zM363 300h2v1h-2zM364 301h1v2h-1zM363 303h1v1h-1zM381 292h1v2h-1zM379 294h5v1h-5zM381 295h1v6h-1zM382 301h2v1h-2zM389 294h4v1h-4zM388 295h1v6h-1zM393 295h1v6h-1zM389 301h4v1h-4zM408 292h1v2h-1zM406 294h5v1h-5zM408 295h1v6h-1zM409 301h2v1h-2zM415 291h1v4h-1zM417 294h3v1h-3zM415 295h2v1h-2zM420 295h1v7h-1zM415 296h1v6h-1zM425 294h4v1h-4zM424 295h1v2h-1zM429 295h1v2h-1zM424 297h6v1h-6zM424 298h1v3h-1zM429 300h1v1h-1zM425 301h4v1h-4zM443 294h4v1h-4zM442 295h1v2h-1zM447 295h1v2h-1zM442 297h6v1h-6zM442 298h1v3h-1zM447 300h1v1h-1zM443 301h4v1h-4zM451 294h1v2h-1zM456 294h1v2h-1zM452 296h1v1h-1zM455 296h1v1h-1zM453 297h2v2h-2zM452 299h1v1h-1zM455 299h1v1h-1zM451 300h1v2h-1zM456 300h1v2h-1zM462 292h1v2h-1zM460 294h5v1h-5zM462 295h1v6h-1zM463 301h2v1h-2zM470 294h4v1h-4zM469 295h1v2h-1zM474 295h1v2h-1zM469 297h6v1h-6zM469 298h1v3h-1zM474 300h1v1h-1zM470 301h4v1h-4zM478 294h1v1h-1zM480 294h3v1h-3zM478 295h2v1h-2zM483 295h1v7h-1zM478 296h1v6h-1zM489 292h1v2h-1zM487 294h5v1h-5zM489 295h1v6h-1zM490 301h2v1h-2zM505 294h1v1h-1zM507 294h3v1h-3zM505 295h2v1h-2zM510 295h1v6h-1zM505 296h1v4h-1zM505 300h2v1h-2zM505 301h1v3h-1zM507 301h3v1h-3zM515 294h4v1h-4zM514 295h1v2h-1zM519 295h1v2h-1zM514 297h6v1h-6zM514 298h1v3h-1zM519 300h1v1h-1zM515 301h4v1h-4zM523 294h1v1h-1zM525 294h3v1h-3zM523 295h2v1h-2zM528 295h1v2h-1zM523 296h1v6h-1zM532 294h3v1h-3zM536 294h2v1h-2zM532 295h1v7h-1zM535 295h1v7h-1zM538 295h1v7h-1zM544 291h1v2h-1zM543 294h2v1h-2zM544 295h1v6h-1zM542 301h5v1h-5zM552 292h1v2h-1zM550 294h5v1h-5zM552 295h1v6h-1zM553 301h2v1h-2zM561 292h1v2h-1zM559 294h5v1h-5zM561 295h1v6h-1zM562 301h2v1h-2zM569 294h4v1h-4zM568 295h1v2h-1zM573 295h1v2h-1zM568 297h6v1h-6zM568 298h1v3h-1zM573 300h1v1h-1zM569 301h4v1h-4zM582 291h1v4h-1zM578 294h3v1h-3zM577 295h1v6h-1zM581 295h2v1h-2zM582 296h1v4h-1zM581 300h2v1h-2zM578 301h3v1h-3zM582 301h1v1h-1zM595 291h1v4h-1zM597 294h3v1h-3zM595 295h2v1h-2zM600 295h1v6h-1zM595 296h1v4h-1zM595 300h2v1h-2zM595 301h1v1h-1zM597 301h3v1h-3zM604 294h1v5h-1zM609 294h1v5h-1zM605 299h1v1h-1zM608 299h2v1h-2zM606 300h2v1h-2zM609 300h1v3h-1zM605 303h4v1h-4zM2 310h4v1h-4zM1 311h1v1h-1zM6 311h1v2h-1zM2 313h5v1h-5zM1 314h1v3h-1zM6 314h1v2h-1zM5 316h2v1h-2zM2 317h3v1h-3zM6 317h1v1h-1zM10 310h1v1h-1zM12 310h3v1h-3zM10 311h2v1h-2zM15 311h1v6h-1zM10 312h1v4h-1zM10 316h2v1h-2zM10 317h1v3h-1zM12 317h3v1h-3zM19 310h1v1h-1zM21 310h3v1h-3zM19 311h2v1h-2zM24 311h1v6h-1zM19 312h1v4h-1zM19 316h2v1h-2zM19 317h1v3h-1zM21 317h3v1h-3zM30 308h2v1h-2zM31 309h1v8h-1zM29 317h5v1h-5zM40 307h1v2h-1zM39 310h2v1h-2zM40 311h1v6h-1zM38 317h5v1h-5zM47 310h4v1h-4zM46 311h1v6h-1zM51 311h1v1h-1zM51 316h1v1h-1zM47 317h4v1h-4zM56 310h4v1h-4zM55 311h1v1h-1zM60 311h1v2h-1zM56 313h5v1h-5zM55 314h1v3h-1zM60 314h1v2h-1zM59 316h2v1h-2zM56 317h3v1h-3zM60 317h1v1h-1zM64 307h1v4h-1zM66 310h3v1h-3zM64 311h2v1h-2zM69 311h1v6h-1zM64 312h1v4h-1zM64 316h2v1h-2zM64 317h1v1h-1zM66 317h3v1h-3zM75 308h2v1h-2zM76 309h1v8h-1zM74 317h5v1h-5zM83 310h4v1h-4zM82 311h1v2h-1zM87 311h1v2h-1zM82 313h6v1h-6zM82 314h1v3h-1zM87 316h1v1h-1zM83 317h4v1h-4zM102 308h2v1h-2zM103 309h1v8h-1zM101 317h5v1h-5zM110 310h4v1h-4zM109 311h1v1h-1zM114 311h1v2h-1zM110 313h5v1h-5zM109 314h1v3h-1zM114 314h1v2h-1zM113 316h2v1h-2zM110 317h3v1h-3zM114 317h1v1h-1zM118 310h1v7h-1zM124 310h1v7h-1zM121 311h1v6h-1zM119 317h2v1h-2zM122 317h2v1h-2zM129 316h2v2h-2zM1 340h7v1h-7zM4 341h1v9h-1zM11 342h4v1h-4zM10 343h1v6h-1zM15 343h1v6h-1zM11 349h4v1h-4zM28 342h1v1h-1zM30 342h3v1h-3zM28 343h2v1h-2zM33 343h1v2h-1zM28 344h1v6h-1zM37 342h1v7h-1zM42 342h1v6h-1zM41 348h2v1h-2zM38 349h3v1h-3zM42 349h1v1h-1zM46 342h1v1h-1zM48 342h3v1h-3zM46 343h2v1h-2zM51 343h1v7h-1zM46 344h1v6h-1zM65 342h4v1h-4zM64 343h1v1h-1zM69 343h1v2h-1zM65 345h5v1h-5zM64 346h1v3h-1zM69 346h1v2h-1zM68 348h2v1h-2zM65 349h3v1h-3zM69 349h1v1h-1zM83 342h4v1h-4zM82 343h1v6h-1zM87 343h1v1h-1zM87 348h1v1h-1zM83 349h4v1h-4zM92 342h4v1h-4zM91 343h1v6h-1zM96 343h1v6h-1zM92 349h4v1h-4zM100 342h3v1h-3zM104 342h2v1h-2zM100 343h1v7h-1zM103 343h1v7h-1zM106 343h1v7h-1zM109 342h3v1h-3zM113 342h2v1h-2zM109 343h1v7h-1zM112 343h1v7h-1zM115 343h1v7h-1zM119 342h4v1h-4zM118 343h1v1h-1zM123 343h1v2h-1zM119 345h5v1h-5zM118 346h1v3h-1zM123 346h1v2h-1zM122 348h2v1h-2zM119 349h3v1h-3zM123 349h1v1h-1zM127 342h1v1h-1zM129 342h3v1h-3zM127 343h2v1h-2zM132 343h1v7h-1zM127 344h1v6h-1zM141 339h1v4h-1zM137 342h3v1h-3zM136 343h1v6h-1zM140 343h2v1h-2zM141 344h1v4h-1zM140 348h2v1h-2zM137 349h3v1h-3zM141 349h1v1h-1zM155 342h4v1h-4zM154 343h1v1h-1zM159 343h1v2h-1zM155 345h5v1h-5zM154 346h1v3h-1zM159 346h1v2h-1zM158 348h2v1h-2zM155 349h3v1h-3zM159 349h1v1h-1zM164 342h4v1h-4zM163 343h1v2h-1zM168 343h1v1h-1zM164 345h2v1h-2zM166 346h2v1h-2zM168 347h1v2h-1zM163 348h1v1h-1zM164 349h4v1h-4zM182 342h4v1h-4zM181 343h1v1h-1zM186 343h1v2h-1zM182 345h5v1h-5zM181 346h1v3h-1zM186 346h1v2h-1zM185 348h2v1h-2zM182 349h3v1h-3zM186 349h1v1h-1zM195 339h1v4h-1zM191 342h3v1h-3zM190 343h1v6h-1zM194 343h2v1h-2zM195 344h1v4h-1zM194 348h2v1h-2zM191 349h3v1h-3zM195 349h1v1h-1zM199 342h3v1h-3zM203 342h2v1h-2zM199 343h1v7h-1zM202 343h1v7h-1zM205 343h1v7h-1zM211 339h1v2h-1zM210 342h2v1h-2zM211 343h1v6h-1zM209 349h5v1h-5zM217 342h1v1h-1zM219 342h3v1h-3zM217 343h2v1h-2zM222 343h1v7h-1zM217 344h1v6h-1zM229 339h1v2h-1zM228 342h2v1h-2zM229 343h1v6h-1zM227 349h5v1h-5zM236 342h4v1h-4zM235 343h1v2h-1zM240 343h1v1h-1zM236 345h2v1h-2zM238 346h2v1h-2zM240 347h1v2h-1zM235 348h1v1h-1zM236 349h4v1h-4zM246 340h1v2h-1zM244 342h5v1h-5zM246 343h1v6h-1zM247 349h2v1h-2zM253 342h1v1h-1zM255 342h3v1h-3zM253 343h2v1h-2zM258 343h1v2h-1zM253 344h1v6h-1zM263 342h4v1h-4zM262 343h1v1h-1zM267 343h1v2h-1zM263 345h5v1h-5zM262 346h1v3h-1zM267 346h1v2h-1zM266 348h2v1h-2zM263 349h3v1h-3zM267 349h1v1h-1zM273 340h1v2h-1zM271 342h5v1h-5zM273 343h1v6h-1zM274 349h2v1h-2zM281 342h4v1h-4zM280 343h1v6h-1zM285 343h1v6h-1zM281 349h4v1h-4zM289 342h1v1h-1zM291 342h3v1h-3zM289 343h2v1h-2zM294 343h1v2h-1zM289 344h1v6h-1zM311 339h1v1h-1zM310 340h1v2h-1zM309 342h1v6h-1zM310 348h1v2h-1zM311 350h1v1h-1zM316 342h1v7h-1zM321 342h1v6h-1zM320 348h2v1h-2zM317 349h3v1h-3zM321 349h1v1h-1zM326 342h4v1h-4zM325 343h1v2h-1zM330 343h1v1h-1zM326 345h2v1h-2zM328 346h2v1h-2zM330 347h1v2h-1zM325 348h1v1h-1zM326 349h4v1h-4zM335 342h4v1h-4zM334 343h1v2h-1zM339 343h1v2h-1zM334 345h6v1h-6zM334 346h1v3h-1zM339 348h1v1h-1zM335 349h4v1h-4zM343 342h1v1h-1zM345 342h3v1h-3zM343 343h2v1h-2zM348 343h1v2h-1zM343 344h1v6h-1zM362 338h1v4h-1zM366 338h1v4h-1zM370 342h1v1h-1zM372 342h3v1h-3zM370 343h2v1h-2zM375 343h1v2h-1zM370 344h1v6h-1zM380 342h4v1h-4zM379 343h1v6h-1zM384 343h1v6h-1zM380 349h4v1h-4zM389 342h4v1h-4zM388 343h1v6h-1zM393 343h1v6h-1zM389 349h4v1h-4zM399 340h1v2h-1zM397 342h5v1h-5zM399 343h1v6h-1zM400 349h2v1h-2zM407 338h1v4h-1zM411 338h1v4h-1zM416 339h1v1h-1zM417 340h1v2h-1zM418 342h1v6h-1zM417 348h1v2h-1zM416 350h1v1h-1zM426 348h2v1h-2zM427 349h1v2h-1zM426 351h1v1h-1zM442 342h1v7h-1zM447 342h1v6h-1zM446 348h2v1h-2zM443 349h3v1h-3zM447 349h1v1h-1zM452 342h4v1h-4zM451 343h1v2h-1zM456 343h1v1h-1zM452 345h2v1h-2zM454 346h2v1h-2zM456 347h1v2h-1zM451 348h1v1h-1zM452 349h4v1h-4zM461 342h4v1h-4zM460 343h1v2h-1zM465 343h1v2h-1zM460 345h6v1h-6zM460 346h1v3h-1zM465 348h1v1h-1zM461 349h4v1h-4zM479 338h1v4h-1zM483 338h1v4h-1zM488 342h4v1h-4zM487 343h1v2h-1zM492 343h1v1h-1zM488 345h2v1h-2zM490 346h2v1h-2zM492 347h1v2h-1zM487 348h1v1h-1zM488 349h4v1h-4zM496 342h1v7h-1zM501 342h1v6h-1zM500 348h2v1h-2zM497 349h3v1h-3zM501 349h1v1h-1zM510 339h1v4h-1zM506 342h3v1h-3zM505 343h1v6h-1zM509 343h2v1h-2zM510 344h1v4h-1zM509 348h2v1h-2zM506 349h3v1h-3zM510 349h1v1h-1zM515 342h4v1h-4zM514 343h1v6h-1zM519 343h1v6h-1zM515 349h4v1h-4zM537 341h1v1h-1zM536 342h1v1h-1zM535 343h1v1h-1zM534 344h1v1h-1zM533 345h1v1h-1zM534 346h1v1h-1zM535 347h1v1h-1zM536 348h1v1h-1zM537 349h1v1h-1zM542 342h4v1h-4zM541 343h1v6h-1zM546 343h1v1h-1zM546 348h1v1h-1zM542 349h4v1h-4zM551 342h4v1h-4zM550 343h1v6h-1zM555 343h1v6h-1zM551 349h4v1h-4zM559 342h3v1h-3zM563 342h2v1h-2zM559 343h1v7h-1zM562 343h1v7h-1zM565 343h1v7h-1zM568 342h3v1h-3zM572 342h2v1h-2zM568 343h1v7h-1zM571 343h1v7h-1zM574 343h1v7h-1zM578 342h4v1h-4zM577 343h1v1h-1zM582 343h1v2h-1zM578 345h5v1h-5zM577 346h1v3h-1zM582 346h1v2h-1zM581 348h2v1h-2zM578 349h3v1h-3zM582 349h1v1h-1zM586 342h1v1h-1zM588 342h3v1h-3zM586 343h2v1h-2zM591 343h1v7h-1zM586 344h1v6h-1zM600 339h1v4h-1zM596 342h3v1h-3zM595 343h1v6h-1zM599 343h2v1h-2zM600 344h1v4h-1zM599 348h2v1h-2zM596 349h3v1h-3zM600 349h1v1h-1zM604 341h1v1h-1zM605 342h1v1h-1zM606 343h1v1h-1zM607 344h1v1h-1zM608 345h1v1h-1zM607 346h1v1h-1zM606 347h1v1h-1zM605 348h1v1h-1zM604 349h1v1h-1zM614 338h1v4h-1zM618 338h1v4h-1zM624 348h2v2h-2zM2 356h4v1h-4zM1 357h1v3h-1zM6 357h1v2h-1zM2 360h2v1h-2zM4 361h2v1h-2zM6 362h1v3h-1zM1 363h1v2h-1zM2 365h4v1h-4zM11 358h4v1h-4zM10 359h1v2h-1zM15 359h1v2h-1zM10 361h6v1h-6zM10 362h1v3h-1zM15 364h1v1h-1zM11 365h4v1h-4zM20 358h4v1h-4zM19 359h1v2h-1zM24 359h1v2h-1zM19 361h6v1h-6zM19 362h1v3h-1zM24 364h1v1h-1zM20 365h4v1h-4zM38 354h1v4h-1zM42 354h1v4h-1zM46 358h3v1h-3zM50 358h2v1h-2zM46 359h1v7h-1zM49 359h1v7h-1zM52 359h1v7h-1zM56 358h4v1h-4zM55 359h1v1h-1zM60 359h1v2h-1zM56 361h5v1h-5zM55 362h1v3h-1zM60 362h1v2h-1zM59 364h2v1h-2zM56 365h3v1h-3zM60 365h1v1h-1zM64 358h1v1h-1zM66 358h3v1h-3zM64 359h2v1h-2zM69 359h1v7h-1zM64 360h1v6h-1zM83 358h4v1h-4zM82 359h1v2h-1zM87 359h1v1h-1zM83 361h2v1h-2zM85 362h2v1h-2zM87 363h1v2h-1zM82 364h1v1h-1zM83 365h4v1h-4zM91 358h1v7h-1zM96 358h1v6h-1zM95 364h2v1h-2zM92 365h3v1h-3zM96 365h1v1h-1zM105 355h1v4h-1zM101 358h3v1h-3zM100 359h1v6h-1zM104 359h2v1h-2zM105 360h1v4h-1zM104 364h2v1h-2zM101 365h3v1h-3zM105 365h1v1h-1zM110 358h4v1h-4zM109 359h1v6h-1zM114 359h1v6h-1zM110 365h4v1h-4zM118 366h7v1h-7zM127 358h1v1h-1zM129 358h3v1h-3zM127 359h2v1h-2zM132 359h1v2h-1zM127 360h1v6h-1zM137 358h4v1h-4zM136 359h1v6h-1zM141 359h1v6h-1zM137 365h4v1h-4zM146 358h4v1h-4zM145 359h1v6h-1zM150 359h1v6h-1zM146 365h4v1h-4zM156 356h1v2h-1zM154 358h5v1h-5zM156 359h1v6h-1zM157 365h2v1h-2zM164 354h1v4h-1zM168 354h1v4h-1zM184 355h2v1h-2zM183 356h1v3h-1zM181 359h5v1h-5zM183 360h1v6h-1zM191 358h4v1h-4zM190 359h1v6h-1zM195 359h1v6h-1zM191 365h4v1h-4zM199 358h1v1h-1zM201 358h3v1h-3zM199 359h2v1h-2zM204 359h1v2h-1zM199 360h1v6h-1zM222 355h1v4h-1zM218 358h3v1h-3zM217 359h1v6h-1zM221 359h2v1h-2zM222 360h1v4h-1zM221 364h2v1h-2zM218 365h3v1h-3zM222 365h1v1h-1zM227 358h4v1h-4zM226 359h1v2h-1zM231 359h1v2h-1zM226 361h6v1h-6zM226 362h1v3h-1zM231 364h1v1h-1zM227 365h4v1h-4zM237 356h1v2h-1zM235 358h5v1h-5zM237 359h1v6h-1zM238 365h2v1h-2zM245 358h4v1h-4zM244 359h1v1h-1zM249 359h1v2h-1zM245 361h5v1h-5zM244 362h1v3h-1zM249 362h1v2h-1zM248 364h2v1h-2zM245 365h3v1h-3zM249 365h1v1h-1zM256 355h1v2h-1zM255 358h2v1h-2zM256 359h1v6h-1zM254 365h5v1h-5zM264 356h2v1h-2zM265 357h1v8h-1zM263 365h5v1h-5zM272 358h4v1h-4zM271 359h1v2h-1zM276 359h1v1h-1zM272 361h2v1h-2zM274 362h2v1h-2zM276 363h1v2h-1zM271 364h1v1h-1zM272 365h4v1h-4zM282 364h2v2h-2zM1 387h1v4h-1zM3 390h3v1h-3zM1 391h2v1h-2zM6 391h1v7h-1zM1 392h1v6h-1zM11 390h4v1h-4zM10 391h1v6h-1zM15 391h1v6h-1zM11 397h4v1h-4zM20 390h4v1h-4zM19 391h1v2h-1zM24 391h1v1h-1zM20 393h2v1h-2zM22 394h2v1h-2zM24 395h1v2h-1zM19 396h1v1h-1zM20 397h4v1h-4zM30 388h1v2h-1zM28 390h5v1h-5zM30 391h1v6h-1zM31 397h2v1h-2zM37 390h1v1h-1zM39 390h3v1h-3zM37 391h2v1h-2zM42 391h1v7h-1zM37 392h1v6h-1zM49 387h1v2h-1zM48 390h2v1h-2zM49 391h1v6h-1zM47 397h5v1h-5zM56 390h4v1h-4zM55 391h1v6h-1zM60 391h1v1h-1zM60 396h1v1h-1zM56 397h4v1h-4zM66 388h3v1h-3zM65 389h1v1h-1zM69 389h1v2h-1zM64 390h1v6h-1zM67 390h1v1h-1zM66 391h1v4h-1zM68 391h2v1h-2zM69 392h1v3h-1zM67 395h3v1h-3zM65 396h1v1h-1zM66 397h4v1h-4zM73 387h1v4h-1zM75 390h3v1h-3zM73 391h2v1h-2zM78 391h1v7h-1zM73 392h1v6h-1zM83 390h4v1h-4zM82 391h1v6h-1zM87 391h1v6h-1zM83 397h4v1h-4zM92 390h4v1h-4zM91 391h1v2h-1zM96 391h1v1h-1zM92 393h2v1h-2zM94 394h2v1h-2zM96 395h1v2h-1zM91 396h1v1h-1zM92 397h4v1h-4zM102 388h1v2h-1zM100 390h5v1h-5zM102 391h1v6h-1zM103 397h2v1h-2zM109 390h1v1h-1zM111 390h3v1h-3zM109 391h2v1h-2zM114 391h1v7h-1zM109 392h1v6h-1zM121 387h1v2h-1zM120 390h2v1h-2zM121 391h1v6h-1zM119 397h5v1h-5zM128 390h4v1h-4zM127 391h1v6h-1zM132 391h1v1h-1zM132 396h1v1h-1zM128 397h4v1h-4zM138 390h2v2h-2zM138 395h2v2h-2zM146 387h2v1h-2zM151 387h1v2h-1zM145 388h1v2h-1zM148 388h1v1h-1zM149 389h2v1h-2zM157 388h1v1h-1zM155 389h5v1h-5zM154 390h1v2h-1zM157 390h1v2h-1zM160 390h1v1h-1zM155 392h3v1h-3zM157 393h3v1h-3zM157 394h1v2h-1zM160 394h1v2h-1zM154 395h1v1h-1zM155 396h5v1h-5zM157 397h1v1h-1z"/><path fill="#66b0d2" d="M1 25h6v1h-6zM19 20h7v1h-7zM22 21h1v9h-1zM29 22h4v1h-4zM28 23h1v6h-1zM33 23h1v6h-1zM29 29h4v1h-4zM47 22h4v1h-4zM46 23h1v2h-1zM51 23h1v1h-1zM47 25h2v1h-2zM49 26h2v1h-2zM51 27h1v2h-1zM46 28h1v1h-1zM47 29h4v1h-4zM56 22h4v1h-4zM55 23h1v2h-1zM60 23h1v2h-1zM55 25h6v1h-6zM55 26h1v3h-1zM60 28h1v1h-1zM56 29h4v1h-4zM65 22h4v1h-4zM64 23h1v2h-1zM69 23h1v2h-1zM64 25h6v1h-6zM64 26h1v3h-1zM69 28h1v1h-1zM65 29h4v1h-4zM84 20h1v2h-1zM82 22h5v1h-5zM84 23h1v6h-1zM85 29h2v1h-2zM91 19h1v4h-1zM93 22h3v1h-3zM91 23h2v1h-2zM96 23h1v7h-1zM91 24h1v6h-1zM101 22h4v1h-4zM100 23h1v2h-1zM105 23h1v2h-1zM100 25h6v1h-6zM100 26h1v3h-1zM105 28h1v1h-1zM101 29h4v1h-4zM118 20h1v6h-1zM123 20h1v6h-1zM120 24h2v2h-2zM118 26h2v2h-2zM122 26h2v2h-2zM118 28h1v2h-1zM123 28h1v2h-1zM128 22h4v1h-4zM127 23h1v6h-1zM132 23h1v6h-1zM128 29h4v1h-4zM136 22h1v1h-1zM138 22h3v1h-3zM136 23h2v1h-2zM141 23h1v2h-1zM136 24h1v6h-1zM150 19h1v4h-1zM146 22h3v1h-3zM145 23h1v6h-1zM149 23h2v1h-2zM150 24h1v4h-1zM149 28h2v1h-2zM146 29h3v1h-3zM150 29h1v1h-1zM154 20h5v1h-5zM154 21h1v3h-1zM159 21h1v3h-1zM154 24h5v1h-5zM154 25h1v5h-1zM163 22h1v1h-1zM165 22h3v1h-3zM163 23h2v1h-2zM168 23h1v2h-1zM163 24h1v6h-1zM173 22h4v1h-4zM172 23h1v2h-1zM177 23h1v2h-1zM172 25h6v1h-6zM172 26h1v3h-1zM177 28h1v1h-1zM173 29h4v1h-4zM182 22h4v1h-4zM181 23h1v2h-1zM186 23h1v1h-1zM182 25h2v1h-2zM184 26h2v1h-2zM186 27h1v2h-1zM181 28h1v1h-1zM182 29h4v1h-4zM191 22h4v1h-4zM190 23h1v2h-1zM195 23h1v1h-1zM191 25h2v1h-2zM193 26h2v1h-2zM195 27h1v2h-1zM190 28h1v1h-1zM191 29h4v1h-4zM209 22h4v1h-4zM208 23h1v6h-1zM213 23h1v1h-1zM213 28h1v1h-1zM209 29h4v1h-4zM218 22h4v1h-4zM217 23h1v6h-1zM222 23h1v6h-1zM218 29h4v1h-4zM226 22h1v1h-1zM228 22h3v1h-3zM226 23h2v1h-2zM231 23h1v7h-1zM226 24h1v6h-1zM238 19h2v1h-2zM237 20h1v3h-1zM235 23h5v1h-5zM237 24h1v6h-1zM247 19h1v2h-1zM246 22h2v1h-2zM247 23h1v6h-1zM245 29h5v1h-5zM258 21h1v2h-1zM254 22h3v1h-3zM253 23h1v3h-1zM257 23h1v3h-1zM254 26h3v1h-3zM254 27h1v1h-1zM254 28h4v1h-4zM253 29h1v2h-1zM258 29h1v2h-1zM254 31h4v1h-4zM262 22h1v7h-1zM267 22h1v6h-1zM266 28h2v1h-2zM263 29h3v1h-3zM267 29h1v1h-1zM271 22h1v1h-1zM273 22h3v1h-3zM271 23h2v1h-2zM276 23h1v2h-1zM271 24h1v6h-1zM281 22h4v1h-4zM280 23h1v1h-1zM285 23h1v2h-1zM281 25h5v1h-5zM280 26h1v3h-1zM285 26h1v2h-1zM284 28h2v1h-2zM281 29h3v1h-3zM285 29h1v1h-1zM291 20h1v2h-1zM289 22h5v1h-5zM291 23h1v6h-1zM292 29h2v1h-2zM301 19h1v2h-1zM300 22h2v1h-2zM301 23h1v6h-1zM299 29h5v1h-5zM308 22h4v1h-4zM307 23h1v6h-1zM312 23h1v6h-1zM308 29h4v1h-4zM316 22h1v1h-1zM318 22h3v1h-3zM316 23h2v1h-2zM321 23h1v7h-1zM316 24h1v6h-1zM337 19h2v1h-2zM336 20h1v3h-1zM334 23h5v1h-5zM336 24h1v6h-1zM346 19h1v2h-1zM345 22h2v1h-2zM346 23h1v6h-1zM344 29h5v1h-5zM354 20h2v1h-2zM355 21h1v8h-1zM353 29h5v1h-5zM362 22h4v1h-4zM361 23h1v2h-1zM366 23h1v2h-1zM361 25h6v1h-6zM361 26h1v3h-1zM366 28h1v1h-1zM362 29h4v1h-4zM372 28h2v1h-2zM373 29h1v2h-1zM372 31h1v1h-1zM388 22h1v1h-1zM390 22h3v1h-3zM388 23h2v1h-2zM393 23h1v6h-1zM388 24h1v4h-1zM388 28h2v1h-2zM388 29h1v3h-1zM390 29h3v1h-3zM399 20h2v1h-2zM400 21h1v8h-1zM398 29h5v1h-5zM407 22h4v1h-4zM406 23h1v2h-1zM411 23h1v2h-1zM406 25h6v1h-6zM406 26h1v3h-1zM411 28h1v1h-1zM407 29h4v1h-4zM416 22h4v1h-4zM415 23h1v1h-1zM420 23h1v2h-1zM416 25h5v1h-5zM415 26h1v3h-1zM420 26h1v2h-1zM419 28h2v1h-2zM416 29h3v1h-3zM420 29h1v1h-1zM425 22h4v1h-4zM424 23h1v2h-1zM429 23h1v1h-1zM425 25h2v1h-2zM427 26h2v1h-2zM429 27h1v2h-1zM424 28h1v1h-1zM425 29h4v1h-4zM434 22h4v1h-4zM433 23h1v2h-1zM438 23h1v2h-1zM433 25h6v1h-6zM433 26h1v3h-1zM438 28h1v1h-1zM434 29h4v1h-4zM452 22h4v1h-4zM451 23h1v6h-1zM456 23h1v1h-1zM456 28h1v1h-1zM452 29h4v1h-4zM460 19h1v4h-1zM462 22h3v1h-3zM460 23h2v1h-2zM465 23h1v7h-1zM460 24h1v6h-1zM470 22h4v1h-4zM469 23h1v2h-1zM474 23h1v2h-1zM469 25h6v1h-6zM469 26h1v3h-1zM474 28h1v1h-1zM470 29h4v1h-4zM479 22h4v1h-4zM478 23h1v6h-1zM483 23h1v1h-1zM483 28h1v1h-1zM479 29h4v1h-4zM487 20h1v5h-1zM491 22h1v1h-1zM490 23h1v1h-1zM489 24h1v1h-1zM487 25h2v1h-2zM487 26h1v4h-1zM489 26h1v1h-1zM490 27h1v1h-1zM491 28h1v1h-1zM492 29h1v1h-1zM498 22h2v2h-2zM498 27h2v2h-2zM1 89h6v1h-6zM19 84h1v9h-1zM24 84h1v9h-1zM20 93h4v1h-4zM28 84h5v1h-5zM28 85h1v3h-1zM33 85h1v3h-1zM28 88h5v1h-5zM28 89h1v5h-1zM31 89h1v1h-1zM32 90h1v2h-1zM33 92h1v2h-1zM37 84h1v9h-1zM37 93h6v1h-6zM48 86h2v2h-2zM48 91h2v2h-2zM1 105h6v1h-6zM19 100h1v9h-1zM24 100h1v9h-1zM20 109h4v1h-4zM29 102h4v1h-4zM28 103h1v2h-1zM33 103h1v1h-1zM29 105h2v1h-2zM31 106h2v1h-2zM33 107h1v2h-1zM28 108h1v1h-1zM29 109h4v1h-4zM38 102h4v1h-4zM37 103h1v2h-1zM42 103h1v2h-1zM37 105h6v1h-6zM37 106h1v3h-1zM42 108h1v1h-1zM38 109h4v1h-4zM46 102h1v1h-1zM48 102h3v1h-3zM46 103h2v1h-2zM51 103h1v2h-1zM46 104h1v6h-1zM55 102h1v1h-1zM57 102h3v1h-3zM55 103h2v1h-2zM60 103h1v7h-1zM55 104h1v6h-1zM65 102h4v1h-4zM64 103h1v1h-1zM69 103h1v2h-1zM65 105h5v1h-5zM64 106h1v3h-1zM69 106h1v2h-1zM68 108h2v1h-2zM65 109h3v1h-3zM69 109h1v1h-1zM73 102h3v1h-3zM77 102h2v1h-2zM73 103h1v7h-1zM76 103h1v7h-1zM79 103h1v7h-1zM83 102h4v1h-4zM82 103h1v2h-1zM87 103h1v2h-1zM82 105h6v1h-6zM82 106h1v3h-1zM87 108h1v1h-1zM83 109h4v1h-4zM93 102h2v2h-2zM93 107h2v2h-2zM1 121h6v1h-6zM19 116h5v1h-5zM19 117h1v3h-1zM24 117h1v3h-1zM19 120h5v1h-5zM19 121h1v5h-1zM30 116h2v1h-2zM31 117h1v8h-1zM29 125h5v1h-5zM38 118h4v1h-4zM37 119h1v2h-1zM42 119h1v2h-1zM37 121h6v1h-6zM37 122h1v3h-1zM42 124h1v1h-1zM38 125h4v1h-4zM47 118h4v1h-4zM46 119h1v1h-1zM51 119h1v2h-1zM47 121h5v1h-5zM46 122h1v3h-1zM51 122h1v2h-1zM50 124h2v1h-2zM47 125h3v1h-3zM51 125h1v1h-1zM56 118h4v1h-4zM55 119h1v2h-1zM60 119h1v1h-1zM56 121h2v1h-2zM58 122h2v1h-2zM60 123h1v2h-1zM55 124h1v1h-1zM56 125h4v1h-4zM65 118h4v1h-4zM64 119h1v2h-1zM69 119h1v2h-1zM64 121h6v1h-6zM64 122h1v3h-1zM69 124h1v1h-1zM65 125h4v1h-4zM82 118h1v1h-1zM84 118h3v1h-3zM82 119h2v1h-2zM87 119h1v2h-1zM82 120h1v6h-1zM92 118h4v1h-4zM91 119h1v2h-1zM96 119h1v2h-1zM91 121h6v1h-6zM91 122h1v3h-1zM96 124h1v1h-1zM92 125h4v1h-4zM101 118h4v1h-4zM100 119h1v2h-1zM105 119h1v1h-1zM101 121h2v1h-2zM103 122h2v1h-2zM105 123h1v2h-1zM100 124h1v1h-1zM101 125h4v1h-4zM110 118h4v1h-4zM109 119h1v2h-1zM114 119h1v2h-1zM109 121h6v1h-6zM109 122h1v3h-1zM114 124h1v1h-1zM110 125h4v1h-4zM120 116h1v2h-1zM118 118h5v1h-5zM120 119h1v6h-1zM121 125h2v1h-2zM138 116h1v2h-1zM136 118h5v1h-5zM138 119h1v6h-1zM139 125h2v1h-2zM145 115h1v4h-1zM147 118h3v1h-3zM145 119h2v1h-2zM150 119h1v7h-1zM145 120h1v6h-1zM155 118h4v1h-4zM154 119h1v2h-1zM159 119h1v2h-1zM154 121h6v1h-6zM154 122h1v3h-1zM159 124h1v1h-1zM155 125h4v1h-4zM173 116h4v1h-4zM172 117h1v8h-1zM177 117h1v8h-1zM173 125h4v1h-4zM181 118h1v1h-1zM183 118h3v1h-3zM181 119h2v1h-2zM186 119h1v6h-1zM181 120h1v4h-1zM181 124h2v1h-2zM181 125h1v3h-1zM183 125h3v1h-3zM191 118h4v1h-4zM190 119h1v2h-1zM195 119h1v2h-1zM190 121h6v1h-6zM190 122h1v3h-1zM195 124h1v1h-1zM191 125h4v1h-4zM199 118h1v1h-1zM201 118h3v1h-3zM199 119h2v1h-2zM204 119h1v7h-1zM199 120h1v6h-1zM208 116h1v9h-1zM208 125h6v1h-6zM220 115h1v2h-1zM219 118h2v1h-2zM220 119h1v6h-1zM218 125h5v1h-5zM228 116h1v2h-1zM226 118h5v1h-5zM228 119h1v6h-1zM229 125h2v1h-2zM236 118h4v1h-4zM235 119h1v2h-1zM240 119h1v2h-1zM235 121h6v1h-6zM235 122h1v3h-1zM240 124h1v1h-1zM236 125h4v1h-4zM245 116h4v1h-4zM244 117h1v3h-1zM249 117h1v2h-1zM245 120h2v1h-2zM247 121h2v1h-2zM249 122h1v3h-1zM244 123h1v2h-1zM245 125h4v1h-4zM253 118h1v1h-1zM255 118h3v1h-3zM253 119h2v1h-2zM258 119h1v6h-1zM253 120h1v4h-1zM253 124h2v1h-2zM253 125h1v3h-1zM255 125h3v1h-3zM263 118h4v1h-4zM262 119h1v2h-1zM267 119h1v2h-1zM262 121h6v1h-6zM262 122h1v3h-1zM267 124h1v1h-1zM263 125h4v1h-4zM272 118h4v1h-4zM271 119h1v2h-1zM276 119h1v2h-1zM271 121h6v1h-6zM271 122h1v3h-1zM276 124h1v1h-1zM272 125h4v1h-4zM285 115h1v4h-1zM281 118h3v1h-3zM280 119h1v6h-1zM284 119h2v1h-2zM285 120h1v4h-1zM284 124h2v1h-2zM281 125h3v1h-3zM285 125h1v1h-1zM299 118h4v1h-4zM298 119h1v1h-1zM303 119h1v2h-1zM299 121h5v1h-5zM298 122h1v3h-1zM303 122h1v2h-1zM302 124h2v1h-2zM299 125h3v1h-3zM303 125h1v1h-1zM312 115h1v4h-1zM308 118h3v1h-3zM307 119h1v6h-1zM311 119h2v1h-2zM312 120h1v4h-1zM311 124h2v1h-2zM308 125h3v1h-3zM312 125h1v1h-1zM316 118h3v1h-3zM320 118h2v1h-2zM316 119h1v7h-1zM319 119h1v7h-1zM322 119h1v7h-1zM328 115h1v2h-1zM327 118h2v1h-2zM328 119h1v6h-1zM326 125h5v1h-5zM334 118h1v1h-1zM336 118h3v1h-3zM334 119h2v1h-2zM339 119h1v7h-1zM334 120h1v6h-1zM352 118h1v1h-1zM354 118h3v1h-3zM352 119h2v1h-2zM357 119h1v6h-1zM352 120h1v4h-1zM352 124h2v1h-2zM352 125h1v3h-1zM354 125h3v1h-3zM362 118h4v1h-4zM361 119h1v1h-1zM366 119h1v2h-1zM362 121h5v1h-5zM361 122h1v3h-1zM366 122h1v2h-1zM365 124h2v1h-2zM362 125h3v1h-3zM366 125h1v1h-1zM371 118h4v1h-4zM370 119h1v2h-1zM375 119h1v1h-1zM371 121h2v1h-2zM373 122h2v1h-2zM375 123h1v2h-1zM370 124h1v1h-1zM371 125h4v1h-4zM380 118h4v1h-4zM379 119h1v2h-1zM384 119h1v1h-1zM380 121h2v1h-2zM382 122h2v1h-2zM384 123h1v2h-1zM379 124h1v1h-1zM380 125h4v1h-4zM388 118h1v7h-1zM394 118h1v7h-1zM391 119h1v6h-1zM389 125h2v1h-2zM392 125h2v1h-2zM398 118h4v1h-4zM397 119h1v6h-1zM402 119h1v6h-1zM398 125h4v1h-4zM406 118h1v1h-1zM408 118h3v1h-3zM406 119h2v1h-2zM411 119h1v2h-1zM406 120h1v6h-1zM420 115h1v4h-1zM416 118h3v1h-3zM415 119h1v6h-1zM419 119h2v1h-2zM420 120h1v4h-1zM419 124h2v1h-2zM416 125h3v1h-3zM420 125h1v1h-1zM426 124h2v1h-2zM427 125h1v2h-1zM426 127h1v1h-1zM442 118h1v1h-1zM444 118h3v1h-3zM442 119h2v1h-2zM447 119h1v2h-1zM442 120h1v6h-1zM451 118h1v7h-1zM456 118h1v6h-1zM455 124h2v1h-2zM452 125h3v1h-3zM456 125h1v1h-1zM460 118h1v1h-1zM462 118h3v1h-3zM460 119h2v1h-2zM465 119h1v7h-1zM460 120h1v6h-1zM471 118h2v2h-2zM471 123h2v2h-2z"/><path fill="#e8be66" d="M6 36h1v2h-1zM5 38h1v1h-1zM4 39h1v2h-1zM3 41h1v2h-1zM2 43h1v1h-1zM1 44h1v2h-1zM10 38h1v7h-1zM15 38h1v6h-1zM14 44h2v1h-2zM11 45h3v1h-3zM15 45h1v1h-1zM20 38h4v1h-4zM19 39h1v2h-1zM24 39h1v1h-1zM20 41h2v1h-2zM22 42h2v1h-2zM24 43h1v2h-1zM19 44h1v1h-1zM20 45h4v1h-4zM28 38h1v1h-1zM30 38h3v1h-3zM28 39h2v1h-2zM33 39h1v2h-1zM28 40h1v6h-1zM42 36h1v2h-1zM41 38h1v1h-1zM40 39h1v2h-1zM39 41h1v2h-1zM38 43h1v1h-1zM37 44h1v2h-1zM48 36h2v1h-2zM49 37h1v8h-1zM47 45h5v1h-5zM56 38h4v1h-4zM55 39h1v6h-1zM60 39h1v6h-1zM56 45h4v1h-4zM65 38h4v1h-4zM64 39h1v6h-1zM69 39h1v1h-1zM69 44h1v1h-1zM65 45h4v1h-4zM74 38h4v1h-4zM73 39h1v1h-1zM78 39h1v2h-1zM74 41h5v1h-5zM73 42h1v3h-1zM78 42h1v2h-1zM77 44h2v1h-2zM74 45h3v1h-3zM78 45h1v1h-1zM84 36h2v1h-2zM85 37h1v8h-1zM83 45h5v1h-5zM96 36h1v2h-1zM95 38h1v1h-1zM94 39h1v2h-1zM93 41h1v2h-1zM92 43h1v1h-1zM91 44h1v2h-1zM102 36h2v1h-2zM103 37h1v8h-1zM101 45h5v1h-5zM110 38h4v1h-4zM109 39h1v2h-1zM114 39h1v1h-1zM110 41h2v1h-2zM112 42h2v1h-2zM114 43h1v2h-1zM109 44h1v1h-1zM110 45h4v1h-4zM118 38h1v7h-1zM124 38h1v7h-1zM121 39h1v6h-1zM119 45h2v1h-2zM122 45h2v1h-2zM128 38h4v1h-4zM127 39h1v2h-1zM132 39h1v1h-1zM128 41h2v1h-2zM130 42h2v1h-2zM132 43h1v2h-1zM127 44h1v1h-1zM128 45h4v1h-4zM141 36h1v2h-1zM140 38h1v1h-1zM139 39h1v2h-1zM138 41h1v2h-1zM137 43h1v1h-1zM136 44h1v2h-1zM145 38h1v7h-1zM151 38h1v7h-1zM148 39h1v6h-1zM146 45h2v1h-2zM149 45h2v1h-2zM155 38h4v1h-4zM154 39h1v6h-1zM159 39h1v6h-1zM155 45h4v1h-4zM163 38h1v1h-1zM165 38h3v1h-3zM163 39h2v1h-2zM168 39h1v2h-1zM163 40h1v6h-1zM177 35h1v4h-1zM173 38h3v1h-3zM172 39h1v6h-1zM176 39h2v1h-2zM177 40h1v4h-1zM176 44h2v1h-2zM173 45h3v1h-3zM177 45h1v1h-1zM181 38h1v1h-1zM183 38h3v1h-3zM181 39h2v1h-2zM186 39h1v6h-1zM181 40h1v4h-1zM181 44h2v1h-2zM181 45h1v3h-1zM183 45h3v1h-3zM190 38h1v1h-1zM192 38h3v1h-3zM190 39h2v1h-2zM195 39h1v2h-1zM190 40h1v6h-1zM200 38h4v1h-4zM199 39h1v2h-1zM204 39h1v2h-1zM199 41h6v1h-6zM199 42h1v3h-1zM204 44h1v1h-1zM200 45h4v1h-4zM209 38h4v1h-4zM208 39h1v2h-1zM213 39h1v1h-1zM209 41h2v1h-2zM211 42h2v1h-2zM213 43h1v2h-1zM208 44h1v1h-1zM209 45h4v1h-4zM218 38h4v1h-4zM217 39h1v2h-1zM222 39h1v1h-1zM218 41h2v1h-2zM220 42h2v1h-2zM222 43h1v2h-1zM217 44h1v1h-1zM218 45h4v1h-4zM231 36h1v2h-1zM230 38h1v1h-1zM229 39h1v2h-1zM228 41h1v2h-1zM227 43h1v1h-1zM226 44h1v2h-1zM235 38h1v7h-1zM241 38h1v7h-1zM238 39h1v6h-1zM236 45h2v1h-2zM239 45h2v1h-2zM244 38h1v1h-1zM246 38h3v1h-3zM244 39h2v1h-2zM249 39h1v6h-1zM244 40h1v4h-1zM244 44h2v1h-2zM244 45h1v3h-1zM246 45h3v1h-3zM253 41h6v1h-6zM263 38h4v1h-4zM262 39h1v6h-1zM267 39h1v1h-1zM267 44h1v1h-1zM263 45h4v1h-4zM272 38h4v1h-4zM271 39h1v6h-1zM276 39h1v6h-1zM272 45h4v1h-4zM280 38h1v1h-1zM282 38h3v1h-3zM280 39h2v1h-2zM285 39h1v7h-1zM280 40h1v6h-1zM292 35h2v1h-2zM291 36h1v3h-1zM289 39h5v1h-5zM291 40h1v6h-1zM301 35h1v2h-1zM300 38h2v1h-2zM301 39h1v6h-1zM299 45h5v1h-5zM312 37h1v2h-1zM308 38h3v1h-3zM307 39h1v3h-1zM311 39h1v3h-1zM308 42h3v1h-3zM308 43h1v1h-1zM308 44h4v1h-4zM307 45h1v2h-1zM312 45h1v2h-1zM308 47h4v1h-4zM318 44h2v2h-2zM325 38h1v1h-1zM327 38h3v1h-3zM325 39h2v1h-2zM330 39h1v6h-1zM325 40h1v4h-1zM325 44h2v1h-2zM325 45h1v3h-1zM327 45h3v1h-3zM334 35h1v4h-1zM336 38h3v1h-3zM334 39h2v1h-2zM339 39h1v7h-1zM334 40h1v6h-1zM343 38h1v1h-1zM345 38h3v1h-3zM343 39h2v1h-2zM348 39h1v6h-1zM343 40h1v4h-1zM343 44h2v1h-2zM343 45h1v3h-1zM345 45h3v1h-3zM2 134h4v1h-4zM1 135h1v2h-1zM6 135h1v1h-1zM2 137h2v1h-2zM4 138h2v1h-2zM6 139h1v2h-1zM1 140h1v1h-1zM2 141h4v1h-4zM10 134h1v7h-1zM15 134h1v6h-1zM14 140h2v1h-2zM11 141h3v1h-3zM15 141h1v1h-1zM24 131h1v4h-1zM20 134h3v1h-3zM19 135h1v6h-1zM23 135h2v1h-2zM24 136h1v4h-1zM23 140h2v1h-2zM20 141h3v1h-3zM24 141h1v1h-1zM29 134h4v1h-4zM28 135h1v6h-1zM33 135h1v6h-1zM29 141h4v1h-4zM46 131h1v4h-1zM48 134h3v1h-3zM46 135h2v1h-2zM51 135h1v6h-1zM46 136h1v4h-1zM46 140h2v1h-2zM46 141h1v1h-1zM48 141h3v1h-3zM56 134h4v1h-4zM55 135h1v1h-1zM60 135h1v2h-1zM56 137h5v1h-5zM55 138h1v3h-1zM60 138h1v2h-1zM59 140h2v1h-2zM56 141h3v1h-3zM60 141h1v1h-1zM65 134h4v1h-4zM64 135h1v2h-1zM69 135h1v1h-1zM65 137h2v1h-2zM67 138h2v1h-2zM69 139h1v2h-1zM64 140h1v1h-1zM65 141h4v1h-4zM73 131h1v4h-1zM75 134h3v1h-3zM73 135h2v1h-2zM78 135h1v7h-1zM73 136h1v6h-1zM96 132h1v2h-1zM95 134h1v1h-1zM94 135h1v2h-1zM93 137h1v2h-1zM92 139h1v1h-1zM91 140h1v2h-1zM100 134h1v7h-1zM105 134h1v6h-1zM104 140h2v1h-2zM101 141h3v1h-3zM105 141h1v1h-1zM110 134h4v1h-4zM109 135h1v2h-1zM114 135h1v1h-1zM110 137h2v1h-2zM112 138h2v1h-2zM114 139h1v2h-1zM109 140h1v1h-1zM110 141h4v1h-4zM118 134h1v1h-1zM120 134h3v1h-3zM118 135h2v1h-2zM123 135h1v2h-1zM118 136h1v6h-1zM132 132h1v2h-1zM131 134h1v1h-1zM130 135h1v2h-1zM129 137h1v2h-1zM128 139h1v1h-1zM127 140h1v2h-1zM138 132h2v1h-2zM139 133h1v8h-1zM137 141h5v1h-5zM146 134h4v1h-4zM145 135h1v6h-1zM150 135h1v6h-1zM146 141h4v1h-4zM155 134h4v1h-4zM154 135h1v6h-1zM159 135h1v1h-1zM159 140h1v1h-1zM155 141h4v1h-4zM164 134h4v1h-4zM163 135h1v1h-1zM168 135h1v2h-1zM164 137h5v1h-5zM163 138h1v3h-1zM168 138h1v2h-1zM167 140h2v1h-2zM164 141h3v1h-3zM168 141h1v1h-1zM174 132h2v1h-2zM175 133h1v8h-1zM173 141h5v1h-5zM186 132h1v2h-1zM185 134h1v1h-1zM184 135h1v2h-1zM183 137h1v2h-1zM182 139h1v1h-1zM181 140h1v2h-1zM192 132h2v1h-2zM193 133h1v8h-1zM191 141h5v1h-5zM200 134h4v1h-4zM199 135h1v2h-1zM204 135h1v1h-1zM200 137h2v1h-2zM202 138h2v1h-2zM204 139h1v2h-1zM199 140h1v1h-1zM200 141h4v1h-4zM208 134h1v7h-1zM214 134h1v7h-1zM211 135h1v6h-1zM209 141h2v1h-2zM212 141h2v1h-2zM218 134h4v1h-4zM217 135h1v2h-1zM222 135h1v1h-1zM218 137h2v1h-2zM220 138h2v1h-2zM222 139h1v2h-1zM217 140h1v1h-1zM218 141h4v1h-4zM231 132h1v2h-1zM230 134h1v1h-1zM229 135h1v2h-1zM228 137h1v2h-1zM227 139h1v1h-1zM226 140h1v2h-1zM236 134h4v1h-4zM235 135h1v1h-1zM240 135h1v2h-1zM236 137h5v1h-5zM235 138h1v3h-1zM240 138h1v2h-1zM239 140h2v1h-2zM236 141h3v1h-3zM240 141h1v1h-1zM249 131h1v4h-1zM245 134h3v1h-3zM244 135h1v6h-1zM248 135h2v1h-2zM249 136h1v4h-1zM248 140h2v1h-2zM245 141h3v1h-3zM249 141h1v1h-1zM253 134h3v1h-3zM257 134h2v1h-2zM253 135h1v7h-1zM256 135h1v7h-1zM259 135h1v7h-1zM265 131h1v2h-1zM264 134h2v1h-2zM265 135h1v6h-1zM263 141h5v1h-5zM271 134h1v1h-1zM273 134h3v1h-3zM271 135h2v1h-2zM276 135h1v7h-1zM271 136h1v6h-1zM285 132h1v2h-1zM284 134h1v1h-1zM283 135h1v2h-1zM282 137h1v2h-1zM281 139h1v1h-1zM280 140h1v2h-1zM289 134h3v1h-3zM293 134h2v1h-2zM289 135h1v7h-1zM292 135h1v7h-1zM295 135h1v7h-1zM301 131h1v2h-1zM300 134h2v1h-2zM301 135h1v6h-1zM299 141h5v1h-5zM308 134h4v1h-4zM307 135h1v2h-1zM312 135h1v1h-1zM308 137h2v1h-2zM310 138h2v1h-2zM312 139h1v2h-1zM307 140h1v1h-1zM308 141h4v1h-4zM317 134h4v1h-4zM316 135h1v6h-1zM321 135h1v1h-1zM321 140h1v1h-1zM317 141h4v1h-4zM330 132h1v2h-1zM329 134h1v1h-1zM328 135h1v2h-1zM327 137h1v2h-1zM326 139h1v1h-1zM325 140h1v2h-1zM335 134h4v1h-4zM334 135h1v1h-1zM339 135h1v2h-1zM335 137h5v1h-5zM334 138h1v3h-1zM339 138h1v2h-1zM338 140h2v1h-2zM335 141h3v1h-3zM339 141h1v1h-1zM348 131h1v4h-1zM344 134h3v1h-3zM343 135h1v6h-1zM347 135h2v1h-2zM348 136h1v4h-1zM347 140h2v1h-2zM344 141h3v1h-3zM348 141h1v1h-1zM352 134h3v1h-3zM356 134h2v1h-2zM352 135h1v7h-1zM355 135h1v7h-1zM358 135h1v7h-1zM361 134h1v1h-1zM363 134h3v1h-3zM361 135h2v1h-2zM366 135h1v6h-1zM361 136h1v4h-1zM361 140h2v1h-2zM361 141h1v3h-1zM363 141h3v1h-3zM371 134h4v1h-4zM370 135h1v1h-1zM375 135h1v2h-1zM371 137h5v1h-5zM370 138h1v3h-1zM375 138h1v2h-1zM374 140h2v1h-2zM371 141h3v1h-3zM375 141h1v1h-1zM380 134h4v1h-4zM379 135h1v2h-1zM384 135h1v1h-1zM380 137h2v1h-2zM382 138h2v1h-2zM384 139h1v2h-1zM379 140h1v1h-1zM380 141h4v1h-4zM389 134h4v1h-4zM388 135h1v2h-1zM393 135h1v1h-1zM389 137h2v1h-2zM391 138h2v1h-2zM393 139h1v2h-1zM388 140h1v1h-1zM389 141h4v1h-4zM399 140h2v2h-2zM407 134h4v1h-4zM406 135h1v2h-1zM411 135h1v1h-1zM407 137h2v1h-2zM409 138h2v1h-2zM411 139h1v2h-1zM406 140h1v1h-1zM407 141h4v1h-4zM415 131h1v4h-1zM417 134h3v1h-3zM415 135h2v1h-2zM420 135h1v7h-1zM415 136h1v6h-1z"/><path fill="#6ab06a" d="M64 83h1v4h-1zM66 86h3v1h-3zM64 87h2v1h-2zM69 87h1v7h-1zM64 88h1v6h-1zM75 84h1v2h-1zM73 86h5v1h-5zM75 87h1v6h-1zM76 93h2v1h-2zM84 84h1v2h-1zM82 86h5v1h-5zM84 87h1v6h-1zM85 93h2v1h-2zM91 86h1v1h-1zM93 86h3v1h-3zM91 87h2v1h-2zM96 87h1v6h-1zM91 88h1v4h-1zM91 92h2v1h-2zM91 93h1v3h-1zM93 93h3v1h-3zM101 86h4v1h-4zM100 87h1v2h-1zM105 87h1v1h-1zM101 89h2v1h-2zM103 90h2v1h-2zM105 91h1v2h-1zM100 92h1v1h-1zM101 93h4v1h-4zM111 86h2v2h-2zM111 91h2v2h-2zM123 84h1v2h-1zM122 86h1v1h-1zM121 87h1v2h-1zM120 89h1v2h-1zM119 91h1v1h-1zM118 92h1v2h-1zM132 84h1v2h-1zM131 86h1v1h-1zM130 87h1v2h-1zM129 89h1v2h-1zM128 91h1v1h-1zM127 92h1v2h-1zM141 85h1v1h-1zM140 86h1v1h-1zM139 87h1v1h-1zM138 88h1v1h-1zM137 89h1v1h-1zM138 90h1v1h-1zM139 91h1v1h-1zM140 92h1v1h-1zM141 93h1v1h-1zM145 84h1v2h-1zM151 84h1v2h-1zM146 86h1v2h-1zM150 86h1v2h-1zM147 88h1v1h-1zM149 88h1v1h-1zM148 89h1v5h-1zM155 84h4v1h-4zM154 85h1v8h-1zM159 85h1v8h-1zM155 93h4v1h-4zM163 84h1v9h-1zM168 84h1v9h-1zM164 93h4v1h-4zM172 84h5v1h-5zM172 85h1v3h-1zM177 85h1v3h-1zM172 88h5v1h-5zM172 89h1v5h-1zM175 89h1v1h-1zM176 90h1v2h-1zM177 92h1v2h-1zM181 94h7v1h-7zM190 84h1v3h-1zM196 84h1v3h-1zM191 87h1v3h-1zM195 87h1v3h-1zM192 90h1v2h-1zM194 90h1v2h-1zM193 92h1v2h-1zM199 84h5v1h-5zM199 85h1v3h-1zM204 85h1v3h-1zM199 88h5v1h-5zM199 89h1v5h-1zM209 84h4v1h-4zM208 85h1v3h-1zM213 85h1v2h-1zM209 88h2v1h-2zM211 89h2v1h-2zM213 90h1v3h-1zM208 91h1v2h-1zM209 93h4v1h-4zM217 94h7v1h-7zM227 84h5v1h-5zM229 85h1v8h-1zM227 93h5v1h-5zM235 84h5v1h-5zM235 85h1v3h-1zM240 85h1v3h-1zM235 88h5v1h-5zM235 89h1v5h-1zM244 85h1v1h-1zM245 86h1v1h-1zM246 87h1v1h-1zM247 88h1v1h-1zM248 89h1v1h-1zM247 90h1v1h-1zM246 91h1v1h-1zM245 92h1v1h-1zM244 93h1v1h-1zM255 86h2v2h-2zM255 91h2v2h-2zM262 84h6v1h-6zM267 85h1v2h-1zM266 87h1v3h-1zM265 90h1v4h-1zM273 84h2v1h-2zM272 85h1v1h-1zM275 85h1v1h-1zM271 86h1v6h-1zM276 86h1v6h-1zM272 92h1v1h-1zM275 92h1v1h-1zM273 93h2v1h-2zM281 84h4v1h-4zM280 85h1v3h-1zM285 85h1v3h-1zM281 88h4v1h-4zM280 89h1v4h-1zM285 89h1v4h-1zM281 93h4v1h-4zM291 84h2v1h-2zM290 85h1v1h-1zM293 85h1v1h-1zM289 86h1v6h-1zM294 86h1v6h-1zM290 92h1v1h-1zM293 92h1v1h-1zM291 93h2v1h-2zM110 102h4v1h-4zM109 103h1v1h-1zM114 103h1v2h-1zM110 105h5v1h-5zM109 106h1v3h-1zM114 106h1v2h-1zM113 108h2v1h-2zM110 109h3v1h-3zM114 109h1v1h-1zM123 99h1v4h-1zM119 102h3v1h-3zM118 103h1v6h-1zM122 103h2v1h-2zM123 104h1v4h-1zM122 108h2v1h-2zM119 109h3v1h-3zM123 109h1v1h-1zM127 102h3v1h-3zM131 102h2v1h-2zM127 103h1v7h-1zM130 103h1v7h-1zM133 103h1v7h-1zM139 99h1v2h-1zM138 102h2v1h-2zM139 103h1v6h-1zM137 109h5v1h-5zM145 102h1v1h-1zM147 102h3v1h-3zM145 103h2v1h-2zM150 103h1v7h-1zM145 104h1v6h-1zM3 164h1v3h-1zM6 164h1v3h-1zM1 167h6v1h-6zM2 168h1v2h-1zM5 168h1v2h-1zM1 170h6v1h-6zM1 171h1v3h-1zM4 171h1v3h-1zM12 164h1v3h-1zM15 164h1v3h-1zM10 167h6v1h-6zM11 168h1v2h-1zM14 168h1v2h-1zM10 170h6v1h-6zM10 171h1v3h-1zM13 171h1v3h-1zM21 164h1v3h-1zM24 164h1v3h-1zM19 167h6v1h-6zM20 168h1v2h-1zM23 168h1v2h-1zM19 170h6v1h-6zM19 171h1v3h-1zM22 171h1v3h-1zM30 164h1v3h-1zM33 164h1v3h-1zM28 167h6v1h-6zM29 168h1v2h-1zM32 168h1v2h-1zM28 170h6v1h-6zM28 171h1v3h-1zM31 171h1v3h-1zM39 164h1v3h-1zM42 164h1v3h-1zM37 167h6v1h-6zM38 168h1v2h-1zM41 168h1v2h-1zM37 170h6v1h-6zM37 171h1v3h-1zM40 171h1v3h-1zM48 164h1v3h-1zM51 164h1v3h-1zM46 167h6v1h-6zM47 168h1v2h-1zM50 168h1v2h-1zM46 170h6v1h-6zM46 171h1v3h-1zM49 171h1v3h-1zM57 164h1v3h-1zM60 164h1v3h-1zM55 167h6v1h-6zM56 168h1v2h-1zM59 168h1v2h-1zM55 170h6v1h-6zM55 171h1v3h-1zM58 171h1v3h-1zM66 164h1v3h-1zM69 164h1v3h-1zM64 167h6v1h-6zM65 168h1v2h-1zM68 168h1v2h-1zM64 170h6v1h-6zM64 171h1v3h-1zM67 171h1v3h-1zM75 164h1v3h-1zM78 164h1v3h-1zM73 167h6v1h-6zM74 168h1v2h-1zM77 168h1v2h-1zM73 170h6v1h-6zM73 171h1v3h-1zM76 171h1v3h-1zM84 164h1v3h-1zM87 164h1v3h-1zM82 167h6v1h-6zM83 168h1v2h-1zM86 168h1v2h-1zM82 170h6v1h-6zM82 171h1v3h-1zM85 171h1v3h-1zM93 164h1v3h-1zM96 164h1v3h-1zM91 167h6v1h-6zM92 168h1v2h-1zM95 168h1v2h-1zM91 170h6v1h-6zM91 171h1v3h-1zM94 171h1v3h-1zM102 164h1v3h-1zM105 164h1v3h-1zM100 167h6v1h-6zM101 168h1v2h-1zM104 168h1v2h-1zM100 170h6v1h-6zM100 171h1v3h-1zM103 171h1v3h-1zM111 164h1v3h-1zM114 164h1v3h-1zM109 167h6v1h-6zM110 168h1v2h-1zM113 168h1v2h-1zM109 170h6v1h-6zM109 171h1v3h-1zM112 171h1v3h-1zM120 164h1v3h-1zM123 164h1v3h-1zM118 167h6v1h-6zM119 168h1v2h-1zM122 168h1v2h-1zM118 170h6v1h-6zM118 171h1v3h-1zM121 171h1v3h-1zM129 164h1v3h-1zM132 164h1v3h-1zM127 167h6v1h-6zM128 168h1v2h-1zM131 168h1v2h-1zM127 170h6v1h-6zM127 171h1v3h-1zM130 171h1v3h-1zM138 164h1v3h-1zM141 164h1v3h-1zM136 167h6v1h-6zM137 168h1v2h-1zM140 168h1v2h-1zM136 170h6v1h-6zM136 171h1v3h-1zM139 171h1v3h-1zM147 164h1v3h-1zM150 164h1v3h-1zM145 167h6v1h-6zM146 168h1v2h-1zM149 168h1v2h-1zM145 170h6v1h-6zM145 171h1v3h-1zM148 171h1v3h-1zM156 164h1v3h-1zM159 164h1v3h-1zM154 167h6v1h-6zM155 168h1v2h-1zM158 168h1v2h-1zM154 170h6v1h-6zM154 171h1v3h-1zM157 171h1v3h-1zM165 164h1v3h-1zM168 164h1v3h-1zM163 167h6v1h-6zM164 168h1v2h-1zM167 168h1v2h-1zM163 170h6v1h-6zM163 171h1v3h-1zM166 171h1v3h-1zM174 164h1v3h-1zM177 164h1v3h-1zM172 167h6v1h-6zM173 168h1v2h-1zM176 168h1v2h-1zM172 170h6v1h-6zM172 171h1v3h-1zM175 171h1v3h-1zM183 164h1v3h-1zM186 164h1v3h-1zM181 167h6v1h-6zM182 168h1v2h-1zM185 168h1v2h-1zM181 170h6v1h-6zM181 171h1v3h-1zM184 171h1v3h-1zM192 164h1v3h-1zM195 164h1v3h-1zM190 167h6v1h-6zM191 168h1v2h-1zM194 168h1v2h-1zM190 170h6v1h-6zM190 171h1v3h-1zM193 171h1v3h-1zM201 164h1v3h-1zM204 164h1v3h-1zM199 167h6v1h-6zM200 168h1v2h-1zM203 168h1v2h-1zM199 170h6v1h-6zM199 171h1v3h-1zM202 171h1v3h-1zM210 164h1v3h-1zM213 164h1v3h-1zM208 167h6v1h-6zM209 168h1v2h-1zM212 168h1v2h-1zM208 170h6v1h-6zM208 171h1v3h-1zM211 171h1v3h-1zM219 164h1v3h-1zM222 164h1v3h-1zM217 167h6v1h-6zM218 168h1v2h-1zM221 168h1v2h-1zM217 170h6v1h-6zM217 171h1v3h-1zM220 171h1v3h-1zM228 164h1v3h-1zM231 164h1v3h-1zM226 167h6v1h-6zM227 168h1v2h-1zM230 168h1v2h-1zM226 170h6v1h-6zM226 171h1v3h-1zM229 171h1v3h-1zM237 164h1v3h-1zM240 164h1v3h-1zM235 167h6v1h-6zM236 168h1v2h-1zM239 168h1v2h-1zM235 170h6v1h-6zM235 171h1v3h-1zM238 171h1v3h-1zM246 164h1v3h-1zM249 164h1v3h-1zM244 167h6v1h-6zM245 168h1v2h-1zM248 168h1v2h-1zM244 170h6v1h-6zM244 171h1v3h-1zM247 171h1v3h-1zM255 164h1v3h-1zM258 164h1v3h-1zM253 167h6v1h-6zM254 168h1v2h-1zM257 168h1v2h-1zM253 170h6v1h-6zM253 171h1v3h-1zM256 171h1v3h-1zM264 164h1v3h-1zM267 164h1v3h-1zM262 167h6v1h-6zM263 168h1v2h-1zM266 168h1v2h-1zM262 170h6v1h-6zM262 171h1v3h-1zM265 171h1v3h-1zM273 164h1v3h-1zM276 164h1v3h-1zM271 167h6v1h-6zM272 168h1v2h-1zM275 168h1v2h-1zM271 170h6v1h-6zM271 171h1v3h-1zM274 171h1v3h-1zM282 164h1v3h-1zM285 164h1v3h-1zM280 167h6v1h-6zM281 168h1v2h-1zM284 168h1v2h-1zM280 170h6v1h-6zM280 171h1v3h-1zM283 171h1v3h-1zM291 164h1v3h-1zM294 164h1v3h-1zM289 167h6v1h-6zM290 168h1v2h-1zM293 168h1v2h-1zM289 170h6v1h-6zM289 171h1v3h-1zM292 171h1v3h-1zM300 164h1v3h-1zM303 164h1v3h-1zM298 167h6v1h-6zM299 168h1v2h-1zM302 168h1v2h-1zM298 170h6v1h-6zM298 171h1v3h-1zM301 171h1v3h-1zM309 164h1v3h-1zM312 164h1v3h-1zM307 167h6v1h-6zM308 168h1v2h-1zM311 168h1v2h-1zM307 170h6v1h-6zM307 171h1v3h-1zM310 171h1v3h-1zM318 164h1v3h-1zM321 164h1v3h-1zM316 167h6v1h-6zM317 168h1v2h-1zM320 168h1v2h-1zM316 170h6v1h-6zM316 171h1v3h-1zM319 171h1v3h-1zM327 164h1v3h-1zM330 164h1v3h-1zM325 167h6v1h-6zM326 168h1v2h-1zM329 168h1v2h-1zM325 170h6v1h-6zM325 171h1v3h-1zM328 171h1v3h-1zM336 164h1v3h-1zM339 164h1v3h-1zM334 167h6v1h-6zM335 168h1v2h-1zM338 168h1v2h-1zM334 170h6v1h-6zM334 171h1v3h-1zM337 171h1v3h-1zM345 164h1v3h-1zM348 164h1v3h-1zM343 167h6v1h-6zM344 168h1v2h-1zM347 168h1v2h-1zM343 170h6v1h-6zM343 171h1v3h-1zM346 171h1v3h-1zM354 164h1v3h-1zM357 164h1v3h-1zM352 167h6v1h-6zM353 168h1v2h-1zM356 168h1v2h-1zM352 170h6v1h-6zM352 171h1v3h-1zM355 171h1v3h-1zM363 164h1v3h-1zM366 164h1v3h-1zM361 167h6v1h-6zM362 168h1v2h-1zM365 168h1v2h-1zM361 170h6v1h-6zM361 171h1v3h-1zM364 171h1v3h-1zM372 164h1v3h-1zM375 164h1v3h-1zM370 167h6v1h-6zM371 168h1v2h-1zM374 168h1v2h-1zM370 170h6v1h-6zM370 171h1v3h-1zM373 171h1v3h-1zM381 164h1v3h-1zM384 164h1v3h-1zM379 167h6v1h-6zM380 168h1v2h-1zM383 168h1v2h-1zM379 170h6v1h-6zM379 171h1v3h-1zM382 171h1v3h-1zM390 164h1v3h-1zM393 164h1v3h-1zM388 167h6v1h-6zM389 168h1v2h-1zM392 168h1v2h-1zM388 170h6v1h-6zM388 171h1v3h-1zM391 171h1v3h-1zM399 164h1v3h-1zM402 164h1v3h-1zM397 167h6v1h-6zM398 168h1v2h-1zM401 168h1v2h-1zM397 170h6v1h-6zM397 171h1v3h-1zM400 171h1v3h-1zM408 164h1v3h-1zM411 164h1v3h-1zM406 167h6v1h-6zM407 168h1v2h-1zM410 168h1v2h-1zM406 170h6v1h-6zM406 171h1v3h-1zM409 171h1v3h-1zM417 164h1v3h-1zM420 164h1v3h-1zM415 167h6v1h-6zM416 168h1v2h-1zM419 168h1v2h-1zM415 170h6v1h-6zM415 171h1v3h-1zM418 171h1v3h-1zM426 164h1v3h-1zM429 164h1v3h-1zM424 167h6v1h-6zM425 168h1v2h-1zM428 168h1v2h-1zM424 170h6v1h-6zM424 171h1v3h-1zM427 171h1v3h-1zM435 164h1v3h-1zM438 164h1v3h-1zM433 167h6v1h-6zM434 168h1v2h-1zM437 168h1v2h-1zM433 170h6v1h-6zM433 171h1v3h-1zM436 171h1v3h-1zM444 164h1v3h-1zM447 164h1v3h-1zM442 167h6v1h-6zM443 168h1v2h-1zM446 168h1v2h-1zM442 170h6v1h-6zM442 171h1v3h-1zM445 171h1v3h-1zM453 164h1v3h-1zM456 164h1v3h-1zM451 167h6v1h-6zM452 168h1v2h-1zM455 168h1v2h-1zM451 170h6v1h-6zM451 171h1v3h-1zM454 171h1v3h-1zM462 164h1v3h-1zM465 164h1v3h-1zM460 167h6v1h-6zM461 168h1v2h-1zM464 168h1v2h-1zM460 170h6v1h-6zM460 171h1v3h-1zM463 171h1v3h-1zM471 164h1v3h-1zM474 164h1v3h-1zM469 167h6v1h-6zM470 168h1v2h-1zM473 168h1v2h-1zM469 170h6v1h-6zM469 171h1v3h-1zM472 171h1v3h-1zM480 164h1v3h-1zM483 164h1v3h-1zM478 167h6v1h-6zM479 168h1v2h-1zM482 168h1v2h-1zM478 170h6v1h-6zM478 171h1v3h-1zM481 171h1v3h-1zM489 164h1v3h-1zM492 164h1v3h-1zM487 167h6v1h-6zM488 168h1v2h-1zM491 168h1v2h-1zM487 170h6v1h-6zM487 171h1v3h-1zM490 171h1v3h-1zM498 164h1v3h-1zM501 164h1v3h-1zM496 167h6v1h-6zM497 168h1v2h-1zM500 168h1v2h-1zM496 170h6v1h-6zM496 171h1v3h-1zM499 171h1v3h-1zM507 164h1v3h-1zM510 164h1v3h-1zM505 167h6v1h-6zM506 168h1v2h-1zM509 168h1v2h-1zM505 170h6v1h-6zM505 171h1v3h-1zM508 171h1v3h-1zM516 164h1v3h-1zM519 164h1v3h-1zM514 167h6v1h-6zM515 168h1v2h-1zM518 168h1v2h-1zM514 170h6v1h-6zM514 171h1v3h-1zM517 171h1v3h-1zM525 164h1v3h-1zM528 164h1v3h-1zM523 167h6v1h-6zM524 168h1v2h-1zM527 168h1v2h-1zM523 170h6v1h-6zM523 171h1v3h-1zM526 171h1v3h-1zM534 164h1v3h-1zM537 164h1v3h-1zM532 167h6v1h-6zM533 168h1v2h-1zM536 168h1v2h-1zM532 170h6v1h-6zM532 171h1v3h-1zM535 171h1v3h-1zM543 164h1v3h-1zM546 164h1v3h-1zM541 167h6v1h-6zM542 168h1v2h-1zM545 168h1v2h-1zM541 170h6v1h-6zM541 171h1v3h-1zM544 171h1v3h-1zM552 164h1v3h-1zM555 164h1v3h-1zM550 167h6v1h-6zM551 168h1v2h-1zM554 168h1v2h-1zM550 170h6v1h-6zM550 171h1v3h-1zM553 171h1v3h-1zM561 164h1v3h-1zM564 164h1v3h-1zM559 167h6v1h-6zM560 168h1v2h-1zM563 168h1v2h-1zM559 170h6v1h-6zM559 171h1v3h-1zM562 171h1v3h-1zM3 180h1v3h-1zM6 180h1v3h-1zM1 183h6v1h-6zM2 184h1v2h-1zM5 184h1v2h-1zM1 186h6v1h-6zM1 187h1v3h-1zM4 187h1v3h-1zM561 180h1v3h-1zM564 180h1v3h-1zM559 183h6v1h-6zM560 184h1v2h-1zM563 184h1v2h-1zM559 186h6v1h-6zM559 187h1v3h-1zM562 187h1v3h-1zM3 196h1v3h-1zM6 196h1v3h-1zM1 199h6v1h-6zM2 200h1v2h-1zM5 200h1v2h-1zM1 202h6v1h-6zM1 203h1v3h-1zM4 203h1v3h-1zM12 196h1v3h-1zM15 196h1v3h-1zM10 199h6v1h-6zM11 200h1v2h-1zM14 200h1v2h-1zM10 202h6v1h-6zM10 203h1v3h-1zM13 203h1v3h-1zM21 196h1v3h-1zM24 196h1v3h-1zM19 199h6v1h-6zM20 200h1v2h-1zM23 200h1v2h-1zM19 202h6v1h-6zM19 203h1v3h-1zM22 203h1v3h-1zM30 196h1v3h-1zM33 196h1v3h-1zM28 199h6v1h-6zM29 200h1v2h-1zM32 200h1v2h-1zM28 202h6v1h-6zM28 203h1v3h-1zM31 203h1v3h-1zM39 196h1v3h-1zM42 196h1v3h-1zM37 199h6v1h-6zM38 200h1v2h-1zM41 200h1v2h-1zM37 202h6v1h-6zM37 203h1v3h-1zM40 203h1v3h-1zM48 196h1v3h-1zM51 196h1v3h-1zM46 199h6v1h-6zM47 200h1v2h-1zM50 200h1v2h-1zM46 202h6v1h-6zM46 203h1v3h-1zM49 203h1v3h-1zM57 196h1v3h-1zM60 196h1v3h-1zM55 199h6v1h-6zM56 200h1v2h-1zM59 200h1v2h-1zM55 202h6v1h-6zM55 203h1v3h-1zM58 203h1v3h-1zM66 196h1v3h-1zM69 196h1v3h-1zM64 199h6v1h-6zM65 200h1v2h-1zM68 200h1v2h-1zM64 202h6v1h-6zM64 203h1v3h-1zM67 203h1v3h-1zM75 196h1v3h-1zM78 196h1v3h-1zM73 199h6v1h-6zM74 200h1v2h-1zM77 200h1v2h-1zM73 202h6v1h-6zM73 203h1v3h-1zM76 203h1v3h-1zM84 196h1v3h-1zM87 196h1v3h-1zM82 199h6v1h-6zM83 200h1v2h-1zM86 200h1v2h-1zM82 202h6v1h-6zM82 203h1v3h-1zM85 203h1v3h-1zM93 196h1v3h-1zM96 196h1v3h-1zM91 199h6v1h-6zM92 200h1v2h-1zM95 200h1v2h-1zM91 202h6v1h-6zM91 203h1v3h-1zM94 203h1v3h-1zM102 196h1v3h-1zM105 196h1v3h-1zM100 199h6v1h-6zM101 200h1v2h-1zM104 200h1v2h-1zM100 202h6v1h-6zM100 203h1v3h-1zM103 203h1v3h-1zM111 196h1v3h-1zM114 196h1v3h-1zM109 199h6v1h-6zM110 200h1v2h-1zM113 200h1v2h-1zM109 202h6v1h-6zM109 203h1v3h-1zM112 203h1v3h-1zM120 196h1v3h-1zM123 196h1v3h-1zM118 199h6v1h-6zM119 200h1v2h-1zM122 200h1v2h-1zM118 202h6v1h-6zM118 203h1v3h-1zM121 203h1v3h-1zM129 196h1v3h-1zM132 196h1v3h-1zM127 199h6v1h-6zM128 200h1v2h-1zM131 200h1v2h-1zM127 202h6v1h-6zM127 203h1v3h-1zM130 203h1v3h-1zM138 196h1v3h-1zM141 196h1v3h-1zM136 199h6v1h-6zM137 200h1v2h-1zM140 200h1v2h-1zM136 202h6v1h-6zM136 203h1v3h-1zM139 203h1v3h-1zM147 196h1v3h-1zM150 196h1v3h-1zM145 199h6v1h-6zM146 200h1v2h-1zM149 200h1v2h-1zM145 202h6v1h-6zM145 203h1v3h-1zM148 203h1v3h-1zM156 196h1v3h-1zM159 196h1v3h-1zM154 199h6v1h-6zM155 200h1v2h-1zM158 200h1v2h-1zM154 202h6v1h-6zM154 203h1v3h-1zM157 203h1v3h-1zM165 196h1v3h-1zM168 196h1v3h-1zM163 199h6v1h-6zM164 200h1v2h-1zM167 200h1v2h-1zM163 202h6v1h-6zM163 203h1v3h-1zM166 203h1v3h-1zM174 196h1v3h-1zM177 196h1v3h-1zM172 199h6v1h-6zM173 200h1v2h-1zM176 200h1v2h-1zM172 202h6v1h-6zM172 203h1v3h-1zM175 203h1v3h-1zM183 196h1v3h-1zM186 196h1v3h-1zM181 199h6v1h-6zM182 200h1v2h-1zM185 200h1v2h-1zM181 202h6v1h-6zM181 203h1v3h-1zM184 203h1v3h-1zM192 196h1v3h-1zM195 196h1v3h-1zM190 199h6v1h-6zM191 200h1v2h-1zM194 200h1v2h-1zM190 202h6v1h-6zM190 203h1v3h-1zM193 203h1v3h-1zM201 196h1v3h-1zM204 196h1v3h-1zM199 199h6v1h-6zM200 200h1v2h-1zM203 200h1v2h-1zM199 202h6v1h-6zM199 203h1v3h-1zM202 203h1v3h-1zM210 196h1v3h-1zM213 196h1v3h-1zM208 199h6v1h-6zM209 200h1v2h-1zM212 200h1v2h-1zM208 202h6v1h-6zM208 203h1v3h-1zM211 203h1v3h-1zM219 196h1v3h-1zM222 196h1v3h-1zM217 199h6v1h-6zM218 200h1v2h-1zM221 200h1v2h-1zM217 202h6v1h-6zM217 203h1v3h-1zM220 203h1v3h-1zM228 196h1v3h-1zM231 196h1v3h-1zM226 199h6v1h-6zM227 200h1v2h-1zM230 200h1v2h-1zM226 202h6v1h-6zM226 203h1v3h-1zM229 203h1v3h-1zM237 196h1v3h-1zM240 196h1v3h-1zM235 199h6v1h-6zM236 200h1v2h-1zM239 200h1v2h-1zM235 202h6v1h-6zM235 203h1v3h-1zM238 203h1v3h-1zM246 196h1v3h-1zM249 196h1v3h-1zM244 199h6v1h-6zM245 200h1v2h-1zM248 200h1v2h-1zM244 202h6v1h-6zM244 203h1v3h-1zM247 203h1v3h-1zM255 196h1v3h-1zM258 196h1v3h-1zM253 199h6v1h-6zM254 200h1v2h-1zM257 200h1v2h-1zM253 202h6v1h-6zM253 203h1v3h-1zM256 203h1v3h-1zM264 196h1v3h-1zM267 196h1v3h-1zM262 199h6v1h-6zM263 200h1v2h-1zM266 200h1v2h-1zM262 202h6v1h-6zM262 203h1v3h-1zM265 203h1v3h-1zM273 196h1v3h-1zM276 196h1v3h-1zM271 199h6v1h-6zM272 200h1v2h-1zM275 200h1v2h-1zM271 202h6v1h-6zM271 203h1v3h-1zM274 203h1v3h-1zM282 196h1v3h-1zM285 196h1v3h-1zM280 199h6v1h-6zM281 200h1v2h-1zM284 200h1v2h-1zM280 202h6v1h-6zM280 203h1v3h-1zM283 203h1v3h-1zM291 196h1v3h-1zM294 196h1v3h-1zM289 199h6v1h-6zM290 200h1v2h-1zM293 200h1v2h-1zM289 202h6v1h-6zM289 203h1v3h-1zM292 203h1v3h-1zM300 196h1v3h-1zM303 196h1v3h-1zM298 199h6v1h-6zM299 200h1v2h-1zM302 200h1v2h-1zM298 202h6v1h-6zM298 203h1v3h-1zM301 203h1v3h-1zM309 196h1v3h-1zM312 196h1v3h-1zM307 199h6v1h-6zM308 200h1v2h-1zM311 200h1v2h-1zM307 202h6v1h-6zM307 203h1v3h-1zM310 203h1v3h-1zM318 196h1v3h-1zM321 196h1v3h-1zM316 199h6v1h-6zM317 200h1v2h-1zM320 200h1v2h-1zM316 202h6v1h-6zM316 203h1v3h-1zM319 203h1v3h-1zM327 196h1v3h-1zM330 196h1v3h-1zM325 199h6v1h-6zM326 200h1v2h-1zM329 200h1v2h-1zM325 202h6v1h-6zM325 203h1v3h-1zM328 203h1v3h-1zM336 196h1v3h-1zM339 196h1v3h-1zM334 199h6v1h-6zM335 200h1v2h-1zM338 200h1v2h-1zM334 202h6v1h-6zM334 203h1v3h-1zM337 203h1v3h-1zM345 196h1v3h-1zM348 196h1v3h-1zM343 199h6v1h-6zM344 200h1v2h-1zM347 200h1v2h-1zM343 202h6v1h-6zM343 203h1v3h-1zM346 203h1v3h-1zM354 196h1v3h-1zM357 196h1v3h-1zM352 199h6v1h-6zM353 200h1v2h-1zM356 200h1v2h-1zM352 202h6v1h-6zM352 203h1v3h-1zM355 203h1v3h-1zM363 196h1v3h-1zM366 196h1v3h-1zM361 199h6v1h-6zM362 200h1v2h-1zM365 200h1v2h-1zM361 202h6v1h-6zM361 203h1v3h-1zM364 203h1v3h-1zM372 196h1v3h-1zM375 196h1v3h-1zM370 199h6v1h-6zM371 200h1v2h-1zM374 200h1v2h-1zM370 202h6v1h-6zM370 203h1v3h-1zM373 203h1v3h-1zM381 196h1v3h-1zM384 196h1v3h-1zM379 199h6v1h-6zM380 200h1v2h-1zM383 200h1v2h-1zM379 202h6v1h-6zM379 203h1v3h-1zM382 203h1v3h-1zM390 196h1v3h-1zM393 196h1v3h-1zM388 199h6v1h-6zM389 200h1v2h-1zM392 200h1v2h-1zM388 202h6v1h-6zM388 203h1v3h-1zM391 203h1v3h-1zM399 196h1v3h-1zM402 196h1v3h-1zM397 199h6v1h-6zM398 200h1v2h-1zM401 200h1v2h-1zM397 202h6v1h-6zM397 203h1v3h-1zM400 203h1v3h-1zM408 196h1v3h-1zM411 196h1v3h-1zM406 199h6v1h-6zM407 200h1v2h-1zM410 200h1v2h-1zM406 202h6v1h-6zM406 203h1v3h-1zM409 203h1v3h-1zM417 196h1v3h-1zM420 196h1v3h-1zM415 199h6v1h-6zM416 200h1v2h-1zM419 200h1v2h-1zM415 202h6v1h-6zM415 203h1v3h-1zM418 203h1v3h-1zM426 196h1v3h-1zM429 196h1v3h-1zM424 199h6v1h-6zM425 200h1v2h-1zM428 200h1v2h-1zM424 202h6v1h-6zM424 203h1v3h-1zM427 203h1v3h-1zM435 196h1v3h-1zM438 196h1v3h-1zM433 199h6v1h-6zM434 200h1v2h-1zM437 200h1v2h-1zM433 202h6v1h-6zM433 203h1v3h-1zM436 203h1v3h-1zM444 196h1v3h-1zM447 196h1v3h-1zM442 199h6v1h-6zM443 200h1v2h-1zM446 200h1v2h-1zM442 202h6v1h-6zM442 203h1v3h-1zM445 203h1v3h-1zM453 196h1v3h-1zM456 196h1v3h-1zM451 199h6v1h-6zM452 200h1v2h-1zM455 200h1v2h-1zM451 202h6v1h-6zM451 203h1v3h-1zM454 203h1v3h-1zM462 196h1v3h-1zM465 196h1v3h-1zM460 199h6v1h-6zM461 200h1v2h-1zM464 200h1v2h-1zM460 202h6v1h-6zM460 203h1v3h-1zM463 203h1v3h-1zM471 196h1v3h-1zM474 196h1v3h-1zM469 199h6v1h-6zM470 200h1v2h-1zM473 200h1v2h-1zM469 202h6v1h-6zM469 203h1v3h-1zM472 203h1v3h-1zM480 196h1v3h-1zM483 196h1v3h-1zM478 199h6v1h-6zM479 200h1v2h-1zM482 200h1v2h-1zM478 202h6v1h-6zM478 203h1v3h-1zM481 203h1v3h-1zM489 196h1v3h-1zM492 196h1v3h-1zM487 199h6v1h-6zM488 200h1v2h-1zM491 200h1v2h-1zM487 202h6v1h-6zM487 203h1v3h-1zM490 203h1v3h-1zM498 196h1v3h-1zM501 196h1v3h-1zM496 199h6v1h-6zM497 200h1v2h-1zM500 200h1v2h-1zM496 202h6v1h-6zM496 203h1v3h-1zM499 203h1v3h-1zM507 196h1v3h-1zM510 196h1v3h-1zM505 199h6v1h-6zM506 200h1v2h-1zM509 200h1v2h-1zM505 202h6v1h-6zM505 203h1v3h-1zM508 203h1v3h-1zM516 196h1v3h-1zM519 196h1v3h-1zM514 199h6v1h-6zM515 200h1v2h-1zM518 200h1v2h-1zM514 202h6v1h-6zM514 203h1v3h-1zM517 203h1v3h-1zM525 196h1v3h-1zM528 196h1v3h-1zM523 199h6v1h-6zM524 200h1v2h-1zM527 200h1v2h-1zM523 202h6v1h-6zM523 203h1v3h-1zM526 203h1v3h-1zM534 196h1v3h-1zM537 196h1v3h-1zM532 199h6v1h-6zM533 200h1v2h-1zM536 200h1v2h-1zM532 202h6v1h-6zM532 203h1v3h-1zM535 203h1v3h-1zM543 196h1v3h-1zM546 196h1v3h-1zM541 199h6v1h-6zM542 200h1v2h-1zM545 200h1v2h-1zM541 202h6v1h-6zM541 203h1v3h-1zM544 203h1v3h-1zM552 196h1v3h-1zM555 196h1v3h-1zM550 199h6v1h-6zM551 200h1v2h-1zM554 200h1v2h-1zM550 202h6v1h-6zM550 203h1v3h-1zM553 203h1v3h-1zM561 196h1v3h-1zM564 196h1v3h-1zM559 199h6v1h-6zM560 200h1v2h-1zM563 200h1v2h-1zM559 202h6v1h-6zM559 203h1v3h-1zM562 203h1v3h-1z"/><path fill="#d46a58" d="M64 180h6v1h-6zM64 181h1v3h-1zM64 184h5v1h-5zM64 185h1v5h-1zM74 182h4v1h-4zM73 183h1v6h-1zM78 183h1v6h-1zM74 189h4v1h-4zM82 182h1v1h-1zM84 182h3v1h-3zM82 183h2v1h-2zM87 183h1v2h-1zM82 184h1v6h-1zM101 182h4v1h-4zM100 183h1v1h-1zM105 183h1v2h-1zM101 185h5v1h-5zM100 186h1v3h-1zM105 186h1v2h-1zM104 188h2v1h-2zM101 189h3v1h-3zM105 189h1v1h-1zM109 182h1v1h-1zM111 182h3v1h-3zM109 183h2v1h-2zM114 183h1v7h-1zM109 184h1v6h-1zM118 182h1v5h-1zM123 182h1v5h-1zM119 187h1v1h-1zM122 187h2v1h-2zM120 188h2v1h-2zM123 188h1v3h-1zM119 191h4v1h-4zM139 179h1v2h-1zM138 182h2v1h-2zM139 183h1v6h-1zM137 189h5v1h-5zM146 182h4v1h-4zM145 183h1v2h-1zM150 183h1v1h-1zM146 185h2v1h-2zM148 186h2v1h-2zM150 187h1v2h-1zM145 188h1v1h-1zM146 189h4v1h-4zM155 182h4v1h-4zM154 183h1v2h-1zM159 183h1v1h-1zM155 185h2v1h-2zM157 186h2v1h-2zM159 187h1v2h-1zM154 188h1v1h-1zM155 189h4v1h-4zM163 182h1v7h-1zM168 182h1v6h-1zM167 188h2v1h-2zM164 189h3v1h-3zM168 189h1v1h-1zM173 182h4v1h-4zM172 183h1v2h-1zM177 183h1v2h-1zM172 185h6v1h-6zM172 186h1v3h-1zM177 188h1v1h-1zM173 189h4v1h-4zM182 182h4v1h-4zM181 183h1v2h-1zM186 183h1v1h-1zM182 185h2v1h-2zM184 186h2v1h-2zM186 187h1v2h-1zM181 188h1v1h-1zM182 189h4v1h-4zM200 182h4v1h-4zM199 183h1v6h-1zM204 183h1v6h-1zM200 189h4v1h-4zM208 182h1v1h-1zM210 182h3v1h-3zM208 183h2v1h-2zM213 183h1v2h-1zM208 184h1v6h-1zM227 182h4v1h-4zM226 183h1v1h-1zM231 183h1v2h-1zM227 185h5v1h-5zM226 186h1v3h-1zM231 186h1v2h-1zM230 188h2v1h-2zM227 189h3v1h-3zM231 189h1v1h-1zM236 182h4v1h-4zM235 183h1v2h-1zM240 183h1v1h-1zM236 185h2v1h-2zM238 186h2v1h-2zM240 187h1v2h-1zM235 188h1v1h-1zM236 189h4v1h-4zM245 182h4v1h-4zM244 183h1v2h-1zM249 183h1v1h-1zM245 185h2v1h-2zM247 186h2v1h-2zM249 187h1v2h-1zM244 188h1v1h-1zM245 189h4v1h-4zM256 179h1v2h-1zM255 182h2v1h-2zM256 183h1v6h-1zM254 189h5v1h-5zM263 182h4v1h-4zM262 183h1v2h-1zM267 183h1v1h-1zM263 185h2v1h-2zM265 186h2v1h-2zM267 187h1v2h-1zM262 188h1v1h-1zM263 189h4v1h-4zM273 180h1v2h-1zM271 182h5v1h-5zM273 183h1v6h-1zM274 189h2v1h-2zM281 182h4v1h-4zM280 183h1v1h-1zM285 183h1v2h-1zM281 185h5v1h-5zM280 186h1v3h-1zM285 186h1v2h-1zM284 188h2v1h-2zM281 189h3v1h-3zM285 189h1v1h-1zM289 182h1v1h-1zM291 182h3v1h-3zM289 183h2v1h-2zM294 183h1v7h-1zM289 184h1v6h-1zM299 182h4v1h-4zM298 183h1v6h-1zM303 183h1v1h-1zM303 188h1v1h-1zM299 189h4v1h-4zM308 182h4v1h-4zM307 183h1v2h-1zM312 183h1v2h-1zM307 185h6v1h-6zM307 186h1v3h-1zM312 188h1v1h-1zM308 189h4v1h-4zM318 188h2v1h-2zM319 189h1v2h-1zM318 191h1v1h-1zM335 182h4v1h-4zM334 183h1v6h-1zM339 183h1v1h-1zM339 188h1v1h-1zM335 189h4v1h-4zM344 182h4v1h-4zM343 183h1v6h-1zM348 183h1v6h-1zM344 189h4v1h-4zM352 182h1v1h-1zM354 182h3v1h-3zM352 183h2v1h-2zM357 183h1v7h-1zM352 184h1v6h-1zM363 180h1v2h-1zM361 182h5v1h-5zM363 183h1v6h-1zM364 189h2v1h-2zM371 182h4v1h-4zM370 183h1v1h-1zM375 183h1v2h-1zM371 185h5v1h-5zM370 186h1v3h-1zM375 186h1v2h-1zM374 188h2v1h-2zM371 189h3v1h-3zM375 189h1v1h-1zM380 182h4v1h-4zM379 183h1v6h-1zM384 183h1v1h-1zM384 188h1v1h-1zM380 189h4v1h-4zM390 180h1v2h-1zM388 182h5v1h-5zM390 183h1v6h-1zM391 189h2v1h-2zM406 182h1v5h-1zM411 182h1v5h-1zM407 187h1v1h-1zM410 187h2v1h-2zM408 188h2v1h-2zM411 188h1v3h-1zM407 191h4v1h-4zM416 182h4v1h-4zM415 183h1v6h-1zM420 183h1v6h-1zM416 189h4v1h-4zM424 182h1v7h-1zM429 182h1v6h-1zM428 188h2v1h-2zM425 189h3v1h-3zM429 189h1v1h-1zM433 182h1v1h-1zM435 182h3v1h-3zM433 183h2v1h-2zM438 183h1v2h-1zM433 184h1v6h-1zM452 182h4v1h-4zM451 183h1v1h-1zM456 183h1v2h-1zM452 185h5v1h-5zM451 186h1v3h-1zM456 186h1v2h-1zM455 188h2v1h-2zM452 189h3v1h-3zM456 189h1v1h-1zM465 179h1v4h-1zM461 182h3v1h-3zM460 183h1v6h-1zM464 183h2v1h-2zM465 184h1v4h-1zM464 188h2v1h-2zM461 189h3v1h-3zM465 189h1v1h-1zM469 182h3v1h-3zM473 182h2v1h-2zM469 183h1v7h-1zM472 183h1v7h-1zM475 183h1v7h-1zM481 179h1v2h-1zM480 182h2v1h-2zM481 183h1v6h-1zM479 189h5v1h-5zM487 182h1v1h-1zM489 182h3v1h-3zM487 183h2v1h-2zM492 183h1v7h-1zM487 184h1v6h-1z"/><rect x="171" y="397" width="9" height="2" fill="#d4d4d4"/></svg>
</body></html>
